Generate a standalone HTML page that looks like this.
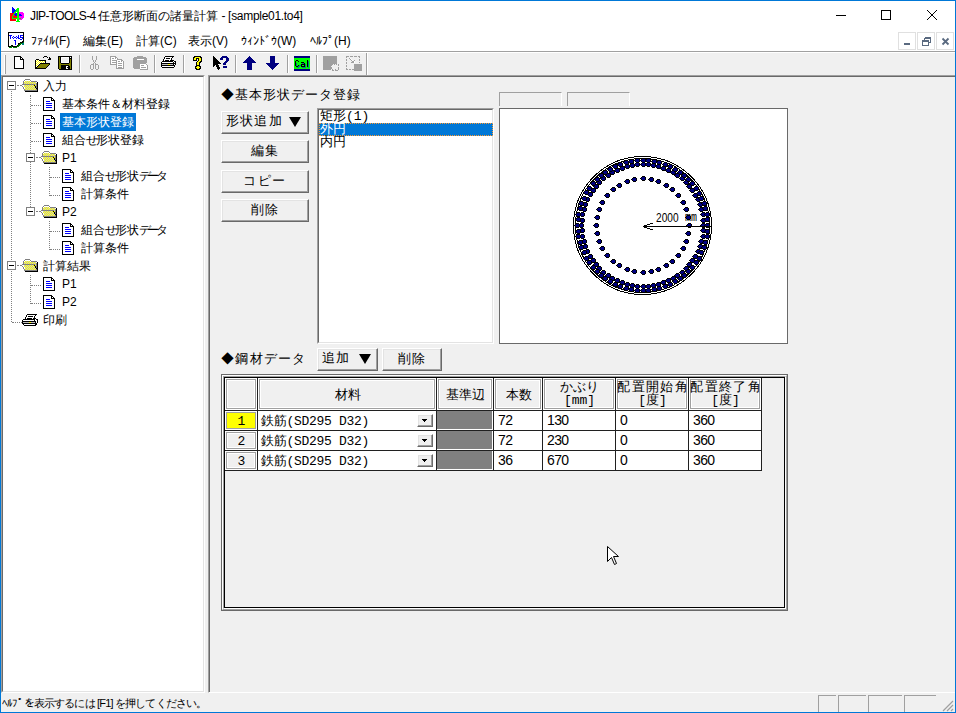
<!DOCTYPE html>
<html><head><meta charset="utf-8">
<style>
*{box-sizing:border-box;margin:0;padding:0}
html,body{width:956px;height:713px;overflow:hidden;background:#f0f0f0;font-family:"Liberation Sans",sans-serif;font-size:12px;color:#000}
.a{position:absolute}
.t{position:absolute;white-space:nowrap;line-height:1}
.m{font-family:"Liberation Mono",monospace}
.sep{position:absolute;top:55px;width:2px;height:18px;border-left:1px solid #a0a0a0;border-right:1px solid #fff}
.btn{position:absolute;background:#f0f0f0;border-top:1px solid #fff;border-left:1px solid #fff;border-right:1px solid #696969;border-bottom:1px solid #696969;box-shadow:inset -1px -1px 0 #a0a0a0,inset 1px 1px 0 #e3e3e3}
.dl{position:absolute;border-left:1px dotted #808080;width:1px}
.dh{position:absolute;border-top:1px dotted #808080;height:1px}
</style></head>
<body>

<div class="a" style="left:0;top:0;width:956px;height:713px;border:1px solid #0078d7"></div>
<div class="a" style="left:1px;top:1px;width:954px;height:50px;background:#fff"></div>
<div class="a" style="left:1px;top:51px;width:954px;height:1px;background:#a0a0a0"></div>
<div class="a" style="left:1px;top:52px;width:954px;height:1px;background:#fff"></div>
<svg class="a" style="left:9px;top:7px" width="16" height="15" viewBox="0 0 16 15" shape-rendering="crispEdges"><rect x="3" y="0" width="1" height="1" fill="#0000ff"/><rect x="3" y="1" width="2" height="1" fill="#0000ff"/><rect x="8" y="1" width="2" height="1" fill="#00ff00"/><rect x="3" y="2" width="3" height="1" fill="#0000ff"/><rect x="7" y="2" width="3" height="1" fill="#00ff00"/><rect x="3" y="3" width="4" height="1" fill="#0000ff"/><rect x="7" y="3" width="3" height="1" fill="#00ff00"/><rect x="3" y="4" width="3" height="1" fill="#0000ff"/><rect x="6" y="4" width="4" height="1" fill="#00ff00"/><rect x="3" y="5" width="2" height="1" fill="#0000ff"/><rect x="5" y="5" width="2" height="1" fill="#00ff00"/><rect x="8" y="5" width="2" height="1" fill="#00ff00"/><rect x="10" y="5" width="4" height="1" fill="#ff00ff"/><rect x="1" y="6" width="4" height="1" fill="#ff0000"/><rect x="5" y="6" width="1" height="1" fill="#00ff00"/><rect x="6" y="6" width="2" height="1" fill="#0000ff"/><rect x="8" y="6" width="2" height="1" fill="#00ff00"/><rect x="10" y="6" width="5" height="1" fill="#ff00ff"/><rect x="1" y="7" width="3" height="1" fill="#ff0000"/><rect x="4" y="7" width="1" height="1" fill="#00ff00"/><rect x="5" y="7" width="3" height="1" fill="#0000ff"/><rect x="8" y="7" width="2" height="1" fill="#00ff00"/><rect x="10" y="7" width="2" height="1" fill="#0000ff"/><rect x="12" y="7" width="3" height="1" fill="#ff00ff"/><rect x="1" y="8" width="3" height="1" fill="#ff0000"/><rect x="4" y="8" width="1" height="1" fill="#00ff00"/><rect x="5" y="8" width="1" height="1" fill="#ff0000"/><rect x="6" y="8" width="2" height="1" fill="#0000ff"/><rect x="8" y="8" width="2" height="1" fill="#00ff00"/><rect x="10" y="8" width="3" height="1" fill="#0000ff"/><rect x="13" y="8" width="2" height="1" fill="#ff00ff"/><rect x="1" y="9" width="2" height="1" fill="#ff0000"/><rect x="3" y="9" width="1" height="1" fill="#00ff00"/><rect x="4" y="9" width="4" height="1" fill="#ff0000"/><rect x="8" y="9" width="2" height="1" fill="#00ff00"/><rect x="10" y="9" width="5" height="1" fill="#ff00ff"/><rect x="1" y="10" width="2" height="1" fill="#ff0000"/><rect x="3" y="10" width="1" height="1" fill="#00ff00"/><rect x="4" y="10" width="4" height="1" fill="#ff0000"/><rect x="8" y="10" width="2" height="1" fill="#00ff00"/><rect x="10" y="10" width="5" height="1" fill="#ff00ff"/><rect x="1" y="11" width="2" height="1" fill="#ff0000"/><rect x="3" y="11" width="9" height="1" fill="#00ff00"/><rect x="12" y="11" width="2" height="1" fill="#ff00ff"/><rect x="1" y="12" width="6" height="1" fill="#ff0000"/><rect x="8" y="12" width="2" height="1" fill="#00ff00"/><rect x="10" y="12" width="3" height="1" fill="#ff00ff"/><rect x="1" y="13" width="6" height="1" fill="#ff0000"/><rect x="8" y="13" width="2" height="1" fill="#00ff00"/><rect x="7" y="14" width="4" height="1" fill="#00ff00"/></svg>
<div class="t" style="left:30px;top:10px;font-size:12px"><span style="letter-spacing:-0.62px">JIP-TOOLS-4 </span>任意形断面の諸量計算<span style="letter-spacing:-0.3px"> - [sample01.to4]</span></div>
<div class="a" style="left:836px;top:15px;width:10px;height:1px;background:#000"></div>
<div class="a" style="left:881px;top:10px;width:10px;height:10px;border:1px solid #000"></div>
<svg class="a" style="left:926px;top:9px" width="12" height="12" viewBox="0 0 12 12"><path d="M1,1 L11,11 M11,1 L1,11" stroke="#000" stroke-width="1"/></svg>
<svg class="a" style="left:8px;top:32px" width="16" height="16" viewBox="0 0 16 16" shape-rendering="crispEdges"><rect x="0" y="0" width="16" height="1" fill="#000"/><rect x="0" y="1" width="1" height="1" fill="#000"/><rect x="1" y="1" width="14" height="1" fill="#fff"/><rect x="15" y="1" width="1" height="1" fill="#000"/><rect x="0" y="2" width="1" height="1" fill="#000"/><rect x="1" y="2" width="14" height="1" fill="#fff"/><rect x="15" y="2" width="1" height="1" fill="#000"/><rect x="0" y="3" width="1" height="1" fill="#000"/><rect x="1" y="3" width="3" height="1" fill="#0000ff"/><rect x="4" y="3" width="6" height="1" fill="#fff"/><rect x="10" y="3" width="1" height="1" fill="#0000ff"/><rect x="11" y="3" width="1" height="1" fill="#fff"/><rect x="12" y="3" width="3" height="1" fill="#0000ff"/><rect x="15" y="3" width="1" height="1" fill="#000"/><rect x="0" y="4" width="1" height="1" fill="#000"/><rect x="1" y="4" width="1" height="1" fill="#fff"/><rect x="2" y="4" width="1" height="1" fill="#0000ff"/><rect x="3" y="4" width="2" height="1" fill="#fff"/><rect x="5" y="4" width="1" height="1" fill="#0000ff"/><rect x="6" y="4" width="2" height="1" fill="#fff"/><rect x="8" y="4" width="1" height="1" fill="#0000ff"/><rect x="9" y="4" width="1" height="1" fill="#fff"/><rect x="10" y="4" width="1" height="1" fill="#0000ff"/><rect x="11" y="4" width="1" height="1" fill="#fff"/><rect x="12" y="4" width="1" height="1" fill="#0000ff"/><rect x="13" y="4" width="2" height="1" fill="#fff"/><rect x="15" y="4" width="1" height="1" fill="#000"/><rect x="0" y="5" width="1" height="1" fill="#000"/><rect x="1" y="5" width="1" height="1" fill="#fff"/><rect x="2" y="5" width="1" height="1" fill="#0000ff"/><rect x="3" y="5" width="1" height="1" fill="#fff"/><rect x="4" y="5" width="1" height="1" fill="#0000ff"/><rect x="5" y="5" width="1" height="1" fill="#fff"/><rect x="6" y="5" width="2" height="1" fill="#0000ff"/><rect x="8" y="5" width="1" height="1" fill="#fff"/><rect x="9" y="5" width="2" height="1" fill="#0000ff"/><rect x="11" y="5" width="1" height="1" fill="#fff"/><rect x="12" y="5" width="3" height="1" fill="#0000ff"/><rect x="15" y="5" width="1" height="1" fill="#000"/><rect x="0" y="6" width="1" height="1" fill="#000"/><rect x="1" y="6" width="1" height="1" fill="#fff"/><rect x="2" y="6" width="1" height="1" fill="#0000ff"/><rect x="3" y="6" width="2" height="1" fill="#fff"/><rect x="5" y="6" width="1" height="1" fill="#0000ff"/><rect x="6" y="6" width="2" height="1" fill="#fff"/><rect x="8" y="6" width="1" height="1" fill="#0000ff"/><rect x="9" y="6" width="1" height="1" fill="#fff"/><rect x="10" y="6" width="2" height="1" fill="#0000ff"/><rect x="12" y="6" width="2" height="1" fill="#fff"/><rect x="14" y="6" width="1" height="1" fill="#0000ff"/><rect x="15" y="6" width="1" height="1" fill="#000"/><rect x="0" y="7" width="1" height="1" fill="#000"/><rect x="1" y="7" width="11" height="1" fill="#fff"/><rect x="12" y="7" width="2" height="1" fill="#0000ff"/><rect x="14" y="7" width="1" height="1" fill="#fff"/><rect x="15" y="7" width="1" height="1" fill="#000"/><rect x="0" y="8" width="1" height="1" fill="#000"/><rect x="1" y="8" width="5" height="1" fill="#fff"/><rect x="6" y="8" width="2" height="1" fill="#0000ff"/><rect x="8" y="8" width="7" height="1" fill="#fff"/><rect x="15" y="8" width="1" height="1" fill="#000"/><rect x="0" y="9" width="1" height="1" fill="#000"/><rect x="1" y="9" width="6" height="1" fill="#fff"/><rect x="7" y="9" width="1" height="1" fill="#0000ff"/><rect x="8" y="9" width="6" height="1" fill="#fff"/><rect x="14" y="9" width="2" height="1" fill="#000"/><rect x="0" y="10" width="1" height="1" fill="#000"/><rect x="1" y="10" width="6" height="1" fill="#fff"/><rect x="7" y="10" width="1" height="1" fill="#0000ff"/><rect x="8" y="10" width="4" height="1" fill="#fff"/><rect x="12" y="10" width="3" height="1" fill="#000"/><rect x="15" y="10" width="1" height="1" fill="#008000"/><rect x="0" y="11" width="1" height="1" fill="#000"/><rect x="1" y="11" width="6" height="1" fill="#fff"/><rect x="7" y="11" width="1" height="1" fill="#0000ff"/><rect x="8" y="11" width="2" height="1" fill="#fff"/><rect x="10" y="11" width="2" height="1" fill="#000"/><rect x="12" y="11" width="2" height="1" fill="#008000"/><rect x="14" y="11" width="2" height="1" fill="#008080"/><rect x="0" y="12" width="1" height="1" fill="#000"/><rect x="1" y="12" width="6" height="1" fill="#fff"/><rect x="7" y="12" width="1" height="1" fill="#0000ff"/><rect x="8" y="12" width="2" height="1" fill="#fff"/><rect x="10" y="12" width="1" height="1" fill="#000"/><rect x="11" y="12" width="2" height="1" fill="#008000"/><rect x="14" y="12" width="2" height="1" fill="#008080"/><rect x="0" y="13" width="1" height="1" fill="#000"/><rect x="1" y="13" width="2" height="1" fill="#fff"/><rect x="3" y="13" width="2" height="1" fill="#000"/><rect x="5" y="13" width="4" height="1" fill="#fff"/><rect x="9" y="13" width="1" height="1" fill="#000"/><rect x="10" y="13" width="2" height="1" fill="#008000"/><rect x="0" y="14" width="3" height="1" fill="#000"/><rect x="3" y="14" width="1" height="1" fill="#008000"/><rect x="4" y="14" width="5" height="1" fill="#000"/><rect x="9" y="14" width="2" height="1" fill="#008000"/><rect x="1" y="15" width="3" height="1" fill="#008000"/><rect x="5" y="15" width="4" height="1" fill="#008000"/></svg>
<div class="t" style="left:31px;top:35px;font-size:12px">ﾌｧｲﾙ(F)</div>
<div class="t" style="left:83px;top:35px;font-size:12px">編集(E)</div>
<div class="t" style="left:136px;top:35px;font-size:12px">計算(C)</div>
<div class="t" style="left:188px;top:35px;font-size:12px">表示(V)</div>
<div class="t" style="left:241px;top:35px;font-size:12px">ｳｨﾝﾄﾞｳ(W)</div>
<div class="t" style="left:310px;top:35px;font-size:12px">ﾍﾙﾌﾟ(H)</div>
<div class="a" style="left:898px;top:32px;width:18px;height:18px;border:1px solid #e0e0e0;background:#fff"></div>
<div class="a" style="left:917px;top:32px;width:18px;height:18px;border:1px solid #e0e0e0;background:#fff"></div>
<div class="a" style="left:936px;top:32px;width:18px;height:18px;border:1px solid #e0e0e0;background:#fff"></div>
<div class="a" style="left:904px;top:43px;width:6px;height:2px;background:#5a6a80"></div>
<svg class="a" style="left:922px;top:37px" width="10" height="10" viewBox="0 0 10 10" shape-rendering="crispEdges"><path d="M2.5,0.5 h6 v5 h-2 M0.5,3.5 h6 v5 h-6z M2.5,0.5 v3 M0.5,4.5 h6 M2.5,1.5 h6" fill="none" stroke="#5a6a80"/></svg>
<svg class="a" style="left:941px;top:37px" width="10" height="10" viewBox="0 0 10 10"><path d="M1.5,1.5 L7.5,7.5 M7.5,1.5 L1.5,7.5" stroke="#5a6a80" stroke-width="1.8"/></svg>
<div class="a" style="left:4px;top:55px;width:2px;height:19px;border-left:1px solid #fff;border-right:1px solid #a0a0a0"></div>
<div class="a" style="left:366px;top:53px;width:2px;height:22px;border-left:1px solid #a0a0a0;border-right:1px solid #fff"></div>
<div class="sep" style="left:79px"></div>
<div class="sep" style="left:154px"></div>
<div class="sep" style="left:183px"></div>
<div class="sep" style="left:235px"></div>
<div class="sep" style="left:287px"></div>
<div class="sep" style="left:316px"></div>
<svg class="a" style="left:14px;top:56px" width="11" height="13" viewBox="0 0 11 13" shape-rendering="crispEdges"><rect x="0" y="0" width="7" height="1" fill="#000"/><rect x="0" y="1" width="1" height="1" fill="#000"/><rect x="1" y="1" width="5" height="1" fill="#fff"/><rect x="6" y="1" width="2" height="1" fill="#000"/><rect x="0" y="2" width="1" height="1" fill="#000"/><rect x="1" y="2" width="5" height="1" fill="#fff"/><rect x="6" y="2" width="1" height="1" fill="#000"/><rect x="7" y="2" width="1" height="1" fill="#fff"/><rect x="8" y="2" width="1" height="1" fill="#000"/><rect x="0" y="3" width="1" height="1" fill="#000"/><rect x="1" y="3" width="5" height="1" fill="#fff"/><rect x="6" y="3" width="4" height="1" fill="#000"/><rect x="0" y="4" width="1" height="1" fill="#000"/><rect x="1" y="4" width="8" height="1" fill="#fff"/><rect x="9" y="4" width="1" height="1" fill="#000"/><rect x="0" y="5" width="1" height="1" fill="#000"/><rect x="1" y="5" width="8" height="1" fill="#fff"/><rect x="9" y="5" width="1" height="1" fill="#000"/><rect x="0" y="6" width="1" height="1" fill="#000"/><rect x="1" y="6" width="8" height="1" fill="#fff"/><rect x="9" y="6" width="1" height="1" fill="#000"/><rect x="0" y="7" width="1" height="1" fill="#000"/><rect x="1" y="7" width="8" height="1" fill="#fff"/><rect x="9" y="7" width="1" height="1" fill="#000"/><rect x="0" y="8" width="1" height="1" fill="#000"/><rect x="1" y="8" width="8" height="1" fill="#fff"/><rect x="9" y="8" width="1" height="1" fill="#000"/><rect x="0" y="9" width="1" height="1" fill="#000"/><rect x="1" y="9" width="8" height="1" fill="#fff"/><rect x="9" y="9" width="1" height="1" fill="#000"/><rect x="0" y="10" width="1" height="1" fill="#000"/><rect x="1" y="10" width="8" height="1" fill="#fff"/><rect x="9" y="10" width="1" height="1" fill="#000"/><rect x="0" y="11" width="1" height="1" fill="#000"/><rect x="1" y="11" width="8" height="1" fill="#fff"/><rect x="9" y="11" width="1" height="1" fill="#000"/><rect x="0" y="12" width="10" height="1" fill="#000"/></svg>
<svg class="a" style="left:35px;top:56px" width="16" height="13" viewBox="0 0 16 13" shape-rendering="crispEdges"><rect x="9" y="0" width="3" height="1" fill="#000"/><rect x="8" y="1" width="1" height="1" fill="#000"/><rect x="12" y="1" width="1" height="1" fill="#000"/><rect x="14" y="1" width="1" height="1" fill="#000"/><rect x="14" y="2" width="2" height="1" fill="#000"/><rect x="1" y="3" width="3" height="1" fill="#000"/><rect x="13" y="3" width="3" height="1" fill="#000"/><rect x="0" y="4" width="1" height="1" fill="#000"/><rect x="1" y="4" width="1" height="1" fill="#fff"/><rect x="2" y="4" width="1" height="1" fill="#ffff00"/><rect x="3" y="4" width="1" height="1" fill="#fff"/><rect x="4" y="4" width="7" height="1" fill="#000"/><rect x="0" y="5" width="1" height="1" fill="#000"/><rect x="1" y="5" width="1" height="1" fill="#ffff00"/><rect x="2" y="5" width="1" height="1" fill="#fff"/><rect x="3" y="5" width="1" height="1" fill="#ffff00"/><rect x="4" y="5" width="1" height="1" fill="#fff"/><rect x="5" y="5" width="1" height="1" fill="#ffff00"/><rect x="6" y="5" width="1" height="1" fill="#fff"/><rect x="7" y="5" width="1" height="1" fill="#ffff00"/><rect x="8" y="5" width="1" height="1" fill="#fff"/><rect x="9" y="5" width="1" height="1" fill="#ffff00"/><rect x="10" y="5" width="1" height="1" fill="#000"/><rect x="0" y="6" width="1" height="1" fill="#000"/><rect x="1" y="6" width="1" height="1" fill="#fff"/><rect x="2" y="6" width="1" height="1" fill="#ffff00"/><rect x="3" y="6" width="1" height="1" fill="#fff"/><rect x="4" y="6" width="1" height="1" fill="#ffff00"/><rect x="5" y="6" width="1" height="1" fill="#fff"/><rect x="6" y="6" width="1" height="1" fill="#ffff00"/><rect x="7" y="6" width="1" height="1" fill="#fff"/><rect x="8" y="6" width="1" height="1" fill="#ffff00"/><rect x="9" y="6" width="1" height="1" fill="#fff"/><rect x="10" y="6" width="1" height="1" fill="#000"/><rect x="0" y="7" width="1" height="1" fill="#000"/><rect x="1" y="7" width="1" height="1" fill="#ffff00"/><rect x="2" y="7" width="1" height="1" fill="#fff"/><rect x="3" y="7" width="1" height="1" fill="#ffff00"/><rect x="4" y="7" width="1" height="1" fill="#fff"/><rect x="5" y="7" width="10" height="1" fill="#000"/><rect x="0" y="8" width="1" height="1" fill="#000"/><rect x="1" y="8" width="1" height="1" fill="#fff"/><rect x="2" y="8" width="1" height="1" fill="#ffff00"/><rect x="3" y="8" width="1" height="1" fill="#fff"/><rect x="4" y="8" width="1" height="1" fill="#000"/><rect x="5" y="8" width="9" height="1" fill="#808000"/><rect x="14" y="8" width="1" height="1" fill="#000"/><rect x="0" y="9" width="1" height="1" fill="#000"/><rect x="1" y="9" width="1" height="1" fill="#ffff00"/><rect x="2" y="9" width="1" height="1" fill="#fff"/><rect x="3" y="9" width="1" height="1" fill="#000"/><rect x="4" y="9" width="9" height="1" fill="#808000"/><rect x="13" y="9" width="1" height="1" fill="#000"/><rect x="0" y="10" width="1" height="1" fill="#000"/><rect x="1" y="10" width="1" height="1" fill="#fff"/><rect x="2" y="10" width="1" height="1" fill="#000"/><rect x="3" y="10" width="9" height="1" fill="#808000"/><rect x="12" y="10" width="1" height="1" fill="#000"/><rect x="0" y="11" width="2" height="1" fill="#000"/><rect x="2" y="11" width="9" height="1" fill="#808000"/><rect x="11" y="11" width="1" height="1" fill="#000"/><rect x="0" y="12" width="11" height="1" fill="#000"/></svg>
<svg class="a" style="left:58px;top:56px" width="14" height="14" viewBox="0 0 14 14" shape-rendering="crispEdges"><rect x="0" y="0" width="14" height="1" fill="#000"/><rect x="0" y="1" width="1" height="1" fill="#000"/><rect x="1" y="1" width="1" height="1" fill="#808000"/><rect x="2" y="1" width="1" height="1" fill="#000"/><rect x="3" y="1" width="8" height="1" fill="#fff"/><rect x="11" y="1" width="1" height="1" fill="#000"/><rect x="12" y="1" width="1" height="1" fill="#fff"/><rect x="13" y="1" width="1" height="1" fill="#000"/><rect x="0" y="2" width="1" height="1" fill="#000"/><rect x="1" y="2" width="1" height="1" fill="#808000"/><rect x="2" y="2" width="1" height="1" fill="#000"/><rect x="3" y="2" width="1" height="1" fill="#fff"/><rect x="4" y="2" width="6" height="1" fill="#f0f0f0"/><rect x="10" y="2" width="1" height="1" fill="#fff"/><rect x="11" y="2" width="3" height="1" fill="#000"/><rect x="0" y="3" width="1" height="1" fill="#000"/><rect x="1" y="3" width="1" height="1" fill="#808000"/><rect x="2" y="3" width="1" height="1" fill="#000"/><rect x="3" y="3" width="1" height="1" fill="#fff"/><rect x="4" y="3" width="6" height="1" fill="#f0f0f0"/><rect x="10" y="3" width="1" height="1" fill="#fff"/><rect x="11" y="3" width="1" height="1" fill="#000"/><rect x="12" y="3" width="1" height="1" fill="#808000"/><rect x="13" y="3" width="1" height="1" fill="#000"/><rect x="0" y="4" width="1" height="1" fill="#000"/><rect x="1" y="4" width="1" height="1" fill="#808000"/><rect x="2" y="4" width="1" height="1" fill="#000"/><rect x="3" y="4" width="1" height="1" fill="#fff"/><rect x="4" y="4" width="6" height="1" fill="#f0f0f0"/><rect x="10" y="4" width="1" height="1" fill="#fff"/><rect x="11" y="4" width="1" height="1" fill="#000"/><rect x="12" y="4" width="1" height="1" fill="#808000"/><rect x="13" y="4" width="1" height="1" fill="#000"/><rect x="0" y="5" width="1" height="1" fill="#000"/><rect x="1" y="5" width="1" height="1" fill="#808000"/><rect x="2" y="5" width="1" height="1" fill="#000"/><rect x="3" y="5" width="1" height="1" fill="#fff"/><rect x="4" y="5" width="6" height="1" fill="#f0f0f0"/><rect x="10" y="5" width="1" height="1" fill="#fff"/><rect x="11" y="5" width="1" height="1" fill="#000"/><rect x="12" y="5" width="1" height="1" fill="#808000"/><rect x="13" y="5" width="1" height="1" fill="#000"/><rect x="0" y="6" width="1" height="1" fill="#000"/><rect x="1" y="6" width="1" height="1" fill="#808000"/><rect x="2" y="6" width="1" height="1" fill="#000"/><rect x="3" y="6" width="8" height="1" fill="#fff"/><rect x="11" y="6" width="1" height="1" fill="#000"/><rect x="12" y="6" width="1" height="1" fill="#808000"/><rect x="13" y="6" width="1" height="1" fill="#000"/><rect x="0" y="7" width="1" height="1" fill="#000"/><rect x="1" y="7" width="2" height="1" fill="#808000"/><rect x="3" y="7" width="8" height="1" fill="#000"/><rect x="11" y="7" width="2" height="1" fill="#808000"/><rect x="13" y="7" width="1" height="1" fill="#000"/><rect x="0" y="8" width="1" height="1" fill="#000"/><rect x="1" y="8" width="12" height="1" fill="#808000"/><rect x="13" y="8" width="1" height="1" fill="#000"/><rect x="0" y="9" width="1" height="1" fill="#000"/><rect x="1" y="9" width="2" height="1" fill="#808000"/><rect x="3" y="9" width="8" height="1" fill="#000"/><rect x="11" y="9" width="2" height="1" fill="#808000"/><rect x="13" y="9" width="1" height="1" fill="#000"/><rect x="0" y="10" width="1" height="1" fill="#000"/><rect x="1" y="10" width="2" height="1" fill="#808000"/><rect x="3" y="10" width="5" height="1" fill="#000"/><rect x="8" y="10" width="2" height="1" fill="#fff"/><rect x="10" y="10" width="2" height="1" fill="#000"/><rect x="12" y="10" width="1" height="1" fill="#808000"/><rect x="13" y="10" width="1" height="1" fill="#000"/><rect x="0" y="11" width="1" height="1" fill="#000"/><rect x="1" y="11" width="2" height="1" fill="#808000"/><rect x="3" y="11" width="5" height="1" fill="#000"/><rect x="8" y="11" width="1" height="1" fill="#fff"/><rect x="9" y="11" width="3" height="1" fill="#000"/><rect x="12" y="11" width="1" height="1" fill="#808000"/><rect x="13" y="11" width="1" height="1" fill="#000"/><rect x="0" y="12" width="1" height="1" fill="#000"/><rect x="1" y="12" width="2" height="1" fill="#808000"/><rect x="3" y="12" width="5" height="1" fill="#000"/><rect x="8" y="12" width="2" height="1" fill="#fff"/><rect x="10" y="12" width="2" height="1" fill="#000"/><rect x="12" y="12" width="1" height="1" fill="#808000"/><rect x="13" y="12" width="1" height="1" fill="#000"/><rect x="1" y="13" width="13" height="1" fill="#000"/></svg>
<svg class="a" style="left:90px;top:56px" width="10" height="14" viewBox="0 0 10 14" shape-rendering="crispEdges"><rect x="2" y="0" width="1" height="1" fill="#a0a0a0"/><rect x="6" y="0" width="1" height="1" fill="#a0a0a0"/><rect x="2" y="1" width="1" height="1" fill="#a0a0a0"/><rect x="6" y="1" width="1" height="1" fill="#a0a0a0"/><rect x="2" y="2" width="1" height="1" fill="#a0a0a0"/><rect x="6" y="2" width="1" height="1" fill="#a0a0a0"/><rect x="2" y="3" width="1" height="1" fill="#a0a0a0"/><rect x="6" y="3" width="1" height="1" fill="#a0a0a0"/><rect x="3" y="4" width="1" height="1" fill="#a0a0a0"/><rect x="5" y="4" width="1" height="1" fill="#a0a0a0"/><rect x="3" y="5" width="1" height="1" fill="#a0a0a0"/><rect x="5" y="5" width="1" height="1" fill="#a0a0a0"/><rect x="4" y="6" width="1" height="1" fill="#a0a0a0"/><rect x="3" y="7" width="1" height="1" fill="#a0a0a0"/><rect x="5" y="7" width="1" height="1" fill="#a0a0a0"/><rect x="1" y="8" width="3" height="1" fill="#a0a0a0"/><rect x="5" y="8" width="3" height="1" fill="#a0a0a0"/><rect x="0" y="9" width="1" height="1" fill="#a0a0a0"/><rect x="3" y="9" width="1" height="1" fill="#a0a0a0"/><rect x="5" y="9" width="1" height="1" fill="#a0a0a0"/><rect x="8" y="9" width="1" height="1" fill="#a0a0a0"/><rect x="0" y="10" width="1" height="1" fill="#a0a0a0"/><rect x="3" y="10" width="1" height="1" fill="#a0a0a0"/><rect x="5" y="10" width="1" height="1" fill="#a0a0a0"/><rect x="8" y="10" width="1" height="1" fill="#a0a0a0"/><rect x="0" y="11" width="1" height="1" fill="#a0a0a0"/><rect x="3" y="11" width="1" height="1" fill="#a0a0a0"/><rect x="5" y="11" width="1" height="1" fill="#a0a0a0"/><rect x="8" y="11" width="1" height="1" fill="#a0a0a0"/><rect x="0" y="12" width="1" height="1" fill="#a0a0a0"/><rect x="3" y="12" width="1" height="1" fill="#a0a0a0"/><rect x="5" y="12" width="1" height="1" fill="#a0a0a0"/><rect x="8" y="12" width="1" height="1" fill="#a0a0a0"/><rect x="1" y="13" width="2" height="1" fill="#a0a0a0"/><rect x="6" y="13" width="2" height="1" fill="#a0a0a0"/></svg>
<svg class="a" style="left:110px;top:56px" width="15" height="13" viewBox="0 0 15 13" shape-rendering="crispEdges"><rect x="0" y="0" width="6" height="1" fill="#a0a0a0"/><rect x="0" y="1" width="1" height="1" fill="#a0a0a0"/><rect x="1" y="1" width="4" height="1" fill="#fff"/><rect x="5" y="1" width="2" height="1" fill="#a0a0a0"/><rect x="0" y="2" width="1" height="1" fill="#a0a0a0"/><rect x="1" y="2" width="1" height="1" fill="#fff"/><rect x="2" y="2" width="2" height="1" fill="#a0a0a0"/><rect x="4" y="2" width="1" height="1" fill="#fff"/><rect x="5" y="2" width="1" height="1" fill="#a0a0a0"/><rect x="6" y="2" width="1" height="1" fill="#fff"/><rect x="7" y="2" width="1" height="1" fill="#a0a0a0"/><rect x="0" y="3" width="1" height="1" fill="#a0a0a0"/><rect x="1" y="3" width="6" height="1" fill="#fff"/><rect x="7" y="3" width="5" height="1" fill="#a0a0a0"/><rect x="0" y="4" width="1" height="1" fill="#a0a0a0"/><rect x="1" y="4" width="1" height="1" fill="#fff"/><rect x="2" y="4" width="5" height="1" fill="#a0a0a0"/><rect x="7" y="4" width="4" height="1" fill="#fff"/><rect x="11" y="4" width="2" height="1" fill="#a0a0a0"/><rect x="0" y="5" width="1" height="1" fill="#a0a0a0"/><rect x="1" y="5" width="5" height="1" fill="#fff"/><rect x="6" y="5" width="1" height="1" fill="#a0a0a0"/><rect x="7" y="5" width="1" height="1" fill="#fff"/><rect x="8" y="5" width="2" height="1" fill="#a0a0a0"/><rect x="10" y="5" width="1" height="1" fill="#fff"/><rect x="11" y="5" width="1" height="1" fill="#a0a0a0"/><rect x="12" y="5" width="1" height="1" fill="#fff"/><rect x="13" y="5" width="1" height="1" fill="#a0a0a0"/><rect x="0" y="6" width="1" height="1" fill="#a0a0a0"/><rect x="1" y="6" width="1" height="1" fill="#fff"/><rect x="2" y="6" width="5" height="1" fill="#a0a0a0"/><rect x="7" y="6" width="6" height="1" fill="#fff"/><rect x="13" y="6" width="1" height="1" fill="#a0a0a0"/><rect x="0" y="7" width="1" height="1" fill="#a0a0a0"/><rect x="1" y="7" width="5" height="1" fill="#fff"/><rect x="6" y="7" width="1" height="1" fill="#a0a0a0"/><rect x="7" y="7" width="1" height="1" fill="#fff"/><rect x="8" y="7" width="4" height="1" fill="#a0a0a0"/><rect x="12" y="7" width="1" height="1" fill="#fff"/><rect x="13" y="7" width="1" height="1" fill="#a0a0a0"/><rect x="0" y="8" width="7" height="1" fill="#a0a0a0"/><rect x="7" y="8" width="6" height="1" fill="#fff"/><rect x="13" y="8" width="1" height="1" fill="#a0a0a0"/><rect x="6" y="9" width="1" height="1" fill="#a0a0a0"/><rect x="7" y="9" width="1" height="1" fill="#fff"/><rect x="8" y="9" width="4" height="1" fill="#a0a0a0"/><rect x="12" y="9" width="1" height="1" fill="#fff"/><rect x="13" y="9" width="1" height="1" fill="#a0a0a0"/><rect x="6" y="10" width="1" height="1" fill="#a0a0a0"/><rect x="7" y="10" width="6" height="1" fill="#fff"/><rect x="13" y="10" width="1" height="1" fill="#a0a0a0"/><rect x="6" y="11" width="1" height="1" fill="#a0a0a0"/><rect x="7" y="11" width="1" height="1" fill="#fff"/><rect x="8" y="11" width="4" height="1" fill="#a0a0a0"/><rect x="12" y="11" width="1" height="1" fill="#fff"/><rect x="13" y="11" width="1" height="1" fill="#a0a0a0"/><rect x="6" y="12" width="8" height="1" fill="#a0a0a0"/></svg>
<svg class="a" style="left:133px;top:56px" width="16" height="14" viewBox="0 0 16 14" shape-rendering="crispEdges"><rect x="4" y="0" width="6" height="1" fill="#a0a0a0"/><rect x="1" y="1" width="12" height="1" fill="#a0a0a0"/><rect x="0" y="2" width="14" height="1" fill="#a0a0a0"/><rect x="0" y="3" width="4" height="1" fill="#a0a0a0"/><rect x="4" y="3" width="7" height="1" fill="#fff"/><rect x="11" y="3" width="3" height="1" fill="#a0a0a0"/><rect x="0" y="4" width="14" height="1" fill="#a0a0a0"/><rect x="0" y="5" width="14" height="1" fill="#a0a0a0"/><rect x="0" y="6" width="14" height="1" fill="#a0a0a0"/><rect x="0" y="7" width="13" height="1" fill="#a0a0a0"/><rect x="0" y="8" width="7" height="1" fill="#a0a0a0"/><rect x="7" y="8" width="6" height="1" fill="#fff"/><rect x="13" y="8" width="1" height="1" fill="#a0a0a0"/><rect x="0" y="9" width="7" height="1" fill="#a0a0a0"/><rect x="7" y="9" width="1" height="1" fill="#fff"/><rect x="8" y="9" width="3" height="1" fill="#a0a0a0"/><rect x="11" y="9" width="3" height="1" fill="#fff"/><rect x="14" y="9" width="1" height="1" fill="#a0a0a0"/><rect x="0" y="10" width="7" height="1" fill="#a0a0a0"/><rect x="7" y="10" width="7" height="1" fill="#fff"/><rect x="14" y="10" width="1" height="1" fill="#a0a0a0"/><rect x="0" y="11" width="7" height="1" fill="#a0a0a0"/><rect x="7" y="11" width="1" height="1" fill="#fff"/><rect x="8" y="11" width="5" height="1" fill="#a0a0a0"/><rect x="13" y="11" width="1" height="1" fill="#fff"/><rect x="14" y="11" width="1" height="1" fill="#a0a0a0"/><rect x="1" y="12" width="6" height="1" fill="#a0a0a0"/><rect x="7" y="12" width="7" height="1" fill="#fff"/><rect x="14" y="12" width="1" height="1" fill="#a0a0a0"/><rect x="7" y="13" width="8" height="1" fill="#a0a0a0"/></svg>
<svg class="a" style="left:161px;top:56px" width="16" height="12" viewBox="0 0 16 12" shape-rendering="crispEdges"><rect x="4" y="0" width="9" height="1" fill="#000"/><rect x="3" y="1" width="1" height="1" fill="#000"/><rect x="4" y="1" width="7" height="1" fill="#fff"/><rect x="11" y="1" width="1" height="1" fill="#000"/><rect x="3" y="2" width="1" height="1" fill="#000"/><rect x="4" y="2" width="1" height="1" fill="#fff"/><rect x="5" y="2" width="4" height="1" fill="#000"/><rect x="9" y="2" width="1" height="1" fill="#fff"/><rect x="10" y="2" width="1" height="1" fill="#000"/><rect x="2" y="3" width="1" height="1" fill="#000"/><rect x="3" y="3" width="7" height="1" fill="#fff"/><rect x="10" y="3" width="1" height="1" fill="#000"/><rect x="2" y="4" width="1" height="1" fill="#000"/><rect x="3" y="4" width="1" height="1" fill="#fff"/><rect x="4" y="4" width="4" height="1" fill="#000"/><rect x="8" y="4" width="1" height="1" fill="#fff"/><rect x="9" y="4" width="4" height="1" fill="#000"/><rect x="1" y="5" width="11" height="1" fill="#000"/><rect x="12" y="5" width="1" height="1" fill="#fff"/><rect x="13" y="5" width="2" height="1" fill="#000"/><rect x="0" y="6" width="1" height="1" fill="#000"/><rect x="1" y="6" width="11" height="1" fill="#fff"/><rect x="12" y="6" width="1" height="1" fill="#000"/><rect x="13" y="6" width="1" height="1" fill="#fff"/><rect x="14" y="6" width="1" height="1" fill="#000"/><rect x="0" y="7" width="15" height="1" fill="#000"/><rect x="0" y="8" width="1" height="1" fill="#000"/><rect x="1" y="8" width="6" height="1" fill="#c0c0c0"/><rect x="7" y="8" width="2" height="1" fill="#ffff00"/><rect x="9" y="8" width="3" height="1" fill="#c0c0c0"/><rect x="12" y="8" width="1" height="1" fill="#000"/><rect x="13" y="8" width="1" height="1" fill="#fff"/><rect x="14" y="8" width="1" height="1" fill="#000"/><rect x="0" y="9" width="14" height="1" fill="#000"/><rect x="0" y="10" width="1" height="1" fill="#000"/><rect x="1" y="10" width="12" height="1" fill="#fff"/><rect x="13" y="10" width="1" height="1" fill="#000"/><rect x="1" y="11" width="12" height="1" fill="#000"/></svg>
<svg class="a" style="left:193px;top:56px" width="10" height="14" viewBox="0 0 10 14" shape-rendering="crispEdges"><rect x="1" y="0" width="7" height="1" fill="#000"/><rect x="0" y="1" width="2" height="1" fill="#000"/><rect x="2" y="1" width="5" height="1" fill="#ffff00"/><rect x="7" y="1" width="2" height="1" fill="#000"/><rect x="0" y="2" width="1" height="1" fill="#000"/><rect x="1" y="2" width="2" height="1" fill="#ffff00"/><rect x="3" y="2" width="3" height="1" fill="#000"/><rect x="6" y="2" width="2" height="1" fill="#ffff00"/><rect x="8" y="2" width="1" height="1" fill="#000"/><rect x="0" y="3" width="1" height="1" fill="#000"/><rect x="1" y="3" width="2" height="1" fill="#ffff00"/><rect x="3" y="3" width="1" height="1" fill="#000"/><rect x="5" y="3" width="1" height="1" fill="#000"/><rect x="6" y="3" width="2" height="1" fill="#ffff00"/><rect x="8" y="3" width="1" height="1" fill="#000"/><rect x="0" y="4" width="4" height="1" fill="#000"/><rect x="5" y="4" width="1" height="1" fill="#000"/><rect x="6" y="4" width="2" height="1" fill="#ffff00"/><rect x="8" y="4" width="1" height="1" fill="#000"/><rect x="4" y="5" width="1" height="1" fill="#000"/><rect x="5" y="5" width="2" height="1" fill="#ffff00"/><rect x="7" y="5" width="2" height="1" fill="#000"/><rect x="3" y="6" width="1" height="1" fill="#000"/><rect x="4" y="6" width="2" height="1" fill="#ffff00"/><rect x="6" y="6" width="2" height="1" fill="#000"/><rect x="3" y="7" width="1" height="1" fill="#000"/><rect x="4" y="7" width="2" height="1" fill="#ffff00"/><rect x="6" y="7" width="1" height="1" fill="#000"/><rect x="3" y="8" width="1" height="1" fill="#000"/><rect x="4" y="8" width="2" height="1" fill="#ffff00"/><rect x="6" y="8" width="1" height="1" fill="#000"/><rect x="3" y="9" width="4" height="1" fill="#000"/><rect x="2" y="10" width="2" height="1" fill="#000"/><rect x="4" y="10" width="2" height="1" fill="#ffff00"/><rect x="6" y="10" width="2" height="1" fill="#000"/><rect x="2" y="11" width="1" height="1" fill="#000"/><rect x="3" y="11" width="4" height="1" fill="#ffff00"/><rect x="7" y="11" width="1" height="1" fill="#000"/><rect x="2" y="12" width="2" height="1" fill="#000"/><rect x="4" y="12" width="2" height="1" fill="#ffff00"/><rect x="6" y="12" width="2" height="1" fill="#000"/><rect x="3" y="13" width="4" height="1" fill="#000"/></svg>
<svg class="a" style="left:213px;top:56px" width="8" height="14" viewBox="0 0 8 14" shape-rendering="crispEdges"><rect x="0" y="0" width="1" height="1" fill="#000"/><rect x="0" y="1" width="2" height="1" fill="#000"/><rect x="0" y="2" width="3" height="1" fill="#000"/><rect x="0" y="3" width="4" height="1" fill="#000"/><rect x="0" y="4" width="5" height="1" fill="#000"/><rect x="0" y="5" width="6" height="1" fill="#000"/><rect x="0" y="6" width="7" height="1" fill="#000"/><rect x="0" y="7" width="8" height="1" fill="#000"/><rect x="0" y="8" width="5" height="1" fill="#000"/><rect x="0" y="9" width="2" height="1" fill="#000"/><rect x="3" y="9" width="3" height="1" fill="#000"/><rect x="0" y="10" width="1" height="1" fill="#000"/><rect x="3" y="10" width="3" height="1" fill="#000"/><rect x="4" y="11" width="3" height="1" fill="#000"/><rect x="4" y="12" width="3" height="1" fill="#000"/><rect x="5" y="13" width="1" height="1" fill="#000"/></svg>
<svg class="a" style="left:220px;top:56px" width="9" height="12" viewBox="0 0 9 12" shape-rendering="crispEdges"><rect x="2" y="0" width="5" height="1" fill="#000080"/><rect x="1" y="1" width="7" height="1" fill="#000080"/><rect x="0" y="2" width="3" height="1" fill="#000080"/><rect x="6" y="2" width="3" height="1" fill="#000080"/><rect x="0" y="3" width="3" height="1" fill="#000080"/><rect x="6" y="3" width="3" height="1" fill="#000080"/><rect x="6" y="4" width="3" height="1" fill="#000080"/><rect x="5" y="5" width="3" height="1" fill="#000080"/><rect x="4" y="6" width="3" height="1" fill="#000080"/><rect x="3" y="7" width="3" height="1" fill="#000080"/><rect x="3" y="8" width="3" height="1" fill="#000080"/><rect x="3" y="10" width="4" height="1" fill="#000080"/><rect x="3" y="11" width="4" height="1" fill="#000080"/></svg>
<svg class="a" style="left:243px;top:56px" width="13" height="14" viewBox="0 0 13 14" shape-rendering="crispEdges"><rect x="6" y="0" width="1" height="1" fill="#000080"/><rect x="5" y="1" width="3" height="1" fill="#000080"/><rect x="4" y="2" width="5" height="1" fill="#000080"/><rect x="3" y="3" width="7" height="1" fill="#000080"/><rect x="2" y="4" width="9" height="1" fill="#000080"/><rect x="1" y="5" width="11" height="1" fill="#000080"/><rect x="0" y="6" width="13" height="1" fill="#000080"/><rect x="4" y="7" width="5" height="1" fill="#000080"/><rect x="4" y="8" width="5" height="1" fill="#000080"/><rect x="4" y="9" width="5" height="1" fill="#000080"/><rect x="4" y="10" width="5" height="1" fill="#000080"/><rect x="4" y="11" width="5" height="1" fill="#000080"/><rect x="4" y="12" width="5" height="1" fill="#000080"/><rect x="4" y="13" width="5" height="1" fill="#000080"/></svg>
<svg class="a" style="left:266px;top:56px" width="13" height="14" viewBox="0 0 13 14" shape-rendering="crispEdges"><rect x="4" y="0" width="5" height="1" fill="#000080"/><rect x="4" y="1" width="5" height="1" fill="#000080"/><rect x="4" y="2" width="5" height="1" fill="#000080"/><rect x="4" y="3" width="5" height="1" fill="#000080"/><rect x="4" y="4" width="5" height="1" fill="#000080"/><rect x="4" y="5" width="5" height="1" fill="#000080"/><rect x="4" y="6" width="5" height="1" fill="#000080"/><rect x="0" y="7" width="13" height="1" fill="#000080"/><rect x="1" y="8" width="11" height="1" fill="#000080"/><rect x="2" y="9" width="9" height="1" fill="#000080"/><rect x="3" y="10" width="7" height="1" fill="#000080"/><rect x="4" y="11" width="5" height="1" fill="#000080"/><rect x="5" y="12" width="3" height="1" fill="#000080"/><rect x="6" y="13" width="1" height="1" fill="#000080"/></svg>
<svg class="a" style="left:294px;top:56px" width="16" height="15" viewBox="0 0 16 15" shape-rendering="crispEdges"><rect x="0" y="0" width="16" height="1" fill="#000080"/><rect x="0" y="1" width="16" height="1" fill="#000080"/><rect x="0" y="2" width="16" height="1" fill="#00ff00"/><rect x="0" y="3" width="16" height="1" fill="#00ff00"/><rect x="0" y="4" width="2" height="1" fill="#00ff00"/><rect x="2" y="4" width="2" height="1" fill="#000"/><rect x="4" y="4" width="9" height="1" fill="#00ff00"/><rect x="13" y="4" width="1" height="1" fill="#000"/><rect x="14" y="4" width="2" height="1" fill="#00ff00"/><rect x="0" y="5" width="1" height="1" fill="#00ff00"/><rect x="1" y="5" width="1" height="1" fill="#000"/><rect x="2" y="5" width="2" height="1" fill="#00ff00"/><rect x="4" y="5" width="1" height="1" fill="#000"/><rect x="5" y="5" width="8" height="1" fill="#00ff00"/><rect x="13" y="5" width="1" height="1" fill="#000"/><rect x="14" y="5" width="1" height="1" fill="#008080"/><rect x="15" y="5" width="1" height="1" fill="#00ff00"/><rect x="0" y="6" width="1" height="1" fill="#00ff00"/><rect x="1" y="6" width="1" height="1" fill="#000"/><rect x="2" y="6" width="5" height="1" fill="#00ff00"/><rect x="7" y="6" width="3" height="1" fill="#000"/><rect x="10" y="6" width="3" height="1" fill="#00ff00"/><rect x="13" y="6" width="1" height="1" fill="#000"/><rect x="14" y="6" width="1" height="1" fill="#008080"/><rect x="15" y="6" width="1" height="1" fill="#00ff00"/><rect x="0" y="7" width="1" height="1" fill="#00ff00"/><rect x="1" y="7" width="1" height="1" fill="#000"/><rect x="2" y="7" width="1" height="1" fill="#008080"/><rect x="3" y="7" width="5" height="1" fill="#00ff00"/><rect x="8" y="7" width="2" height="1" fill="#008080"/><rect x="10" y="7" width="1" height="1" fill="#000"/><rect x="11" y="7" width="2" height="1" fill="#00ff00"/><rect x="13" y="7" width="1" height="1" fill="#000"/><rect x="14" y="7" width="1" height="1" fill="#008080"/><rect x="15" y="7" width="1" height="1" fill="#00ff00"/><rect x="0" y="8" width="1" height="1" fill="#00ff00"/><rect x="1" y="8" width="1" height="1" fill="#000"/><rect x="2" y="8" width="1" height="1" fill="#008080"/><rect x="3" y="8" width="4" height="1" fill="#00ff00"/><rect x="7" y="8" width="4" height="1" fill="#000"/><rect x="11" y="8" width="1" height="1" fill="#008080"/><rect x="12" y="8" width="1" height="1" fill="#00ff00"/><rect x="13" y="8" width="1" height="1" fill="#000"/><rect x="14" y="8" width="1" height="1" fill="#008080"/><rect x="15" y="8" width="1" height="1" fill="#00ff00"/><rect x="0" y="9" width="1" height="1" fill="#00ff00"/><rect x="1" y="9" width="1" height="1" fill="#000"/><rect x="2" y="9" width="1" height="1" fill="#008080"/><rect x="3" y="9" width="1" height="1" fill="#00ff00"/><rect x="4" y="9" width="1" height="1" fill="#000"/><rect x="5" y="9" width="2" height="1" fill="#008080"/><rect x="7" y="9" width="1" height="1" fill="#000"/><rect x="8" y="9" width="2" height="1" fill="#00ff00"/><rect x="10" y="9" width="1" height="1" fill="#000"/><rect x="11" y="9" width="1" height="1" fill="#008080"/><rect x="12" y="9" width="1" height="1" fill="#00ff00"/><rect x="13" y="9" width="1" height="1" fill="#000"/><rect x="14" y="9" width="1" height="1" fill="#008080"/><rect x="15" y="9" width="1" height="1" fill="#00ff00"/><rect x="0" y="10" width="2" height="1" fill="#00ff00"/><rect x="2" y="10" width="2" height="1" fill="#000"/><rect x="4" y="10" width="2" height="1" fill="#008080"/><rect x="6" y="10" width="1" height="1" fill="#00ff00"/><rect x="7" y="10" width="4" height="1" fill="#000"/><rect x="11" y="10" width="1" height="1" fill="#008080"/><rect x="12" y="10" width="1" height="1" fill="#00ff00"/><rect x="13" y="10" width="1" height="1" fill="#000"/><rect x="14" y="10" width="1" height="1" fill="#008080"/><rect x="15" y="10" width="1" height="1" fill="#00ff00"/><rect x="0" y="11" width="3" height="1" fill="#00ff00"/><rect x="3" y="11" width="2" height="1" fill="#008080"/><rect x="5" y="11" width="3" height="1" fill="#00ff00"/><rect x="8" y="11" width="4" height="1" fill="#008080"/><rect x="12" y="11" width="2" height="1" fill="#00ff00"/><rect x="14" y="11" width="1" height="1" fill="#008080"/><rect x="15" y="11" width="1" height="1" fill="#00ff00"/><rect x="0" y="12" width="16" height="1" fill="#00ff00"/><rect x="0" y="13" width="16" height="1" fill="#000080"/><rect x="0" y="14" width="16" height="1" fill="#000080"/></svg>
<svg class="a" style="left:323px;top:56px" width="16" height="15" viewBox="0 0 16 15" shape-rendering="crispEdges"><rect x="0" y="0" width="14" height="1" fill="#a0a0a0"/><rect x="0" y="1" width="14" height="1" fill="#a0a0a0"/><rect x="0" y="2" width="14" height="1" fill="#a0a0a0"/><rect x="0" y="3" width="14" height="1" fill="#a0a0a0"/><rect x="0" y="4" width="14" height="1" fill="#a0a0a0"/><rect x="0" y="5" width="14" height="1" fill="#a0a0a0"/><rect x="0" y="6" width="14" height="1" fill="#a0a0a0"/><rect x="0" y="7" width="14" height="1" fill="#a0a0a0"/><rect x="0" y="8" width="10" height="1" fill="#a0a0a0"/><rect x="11" y="8" width="1" height="1" fill="#a0a0a0"/><rect x="13" y="8" width="1" height="1" fill="#a0a0a0"/><rect x="15" y="8" width="1" height="1" fill="#a0a0a0"/><rect x="0" y="9" width="9" height="1" fill="#a0a0a0"/><rect x="15" y="9" width="1" height="1" fill="#a0a0a0"/><rect x="0" y="10" width="8" height="1" fill="#a0a0a0"/><rect x="0" y="11" width="9" height="1" fill="#a0a0a0"/><rect x="15" y="11" width="1" height="1" fill="#a0a0a0"/><rect x="0" y="12" width="9" height="1" fill="#a0a0a0"/><rect x="15" y="12" width="1" height="1" fill="#a0a0a0"/><rect x="0" y="13" width="8" height="1" fill="#a0a0a0"/><rect x="9" y="13" width="1" height="1" fill="#a0a0a0"/><rect x="12" y="13" width="1" height="1" fill="#a0a0a0"/><rect x="15" y="13" width="1" height="1" fill="#a0a0a0"/><rect x="9" y="14" width="2" height="1" fill="#a0a0a0"/><rect x="12" y="14" width="3" height="1" fill="#a0a0a0"/></svg>
<svg class="a" style="left:346px;top:56px" width="17" height="15" viewBox="0 0 17 15" shape-rendering="crispEdges"><rect x="0" y="0" width="3" height="1" fill="#a0a0a0"/><rect x="4" y="0" width="3" height="1" fill="#a0a0a0"/><rect x="8" y="0" width="3" height="1" fill="#a0a0a0"/><rect x="12" y="0" width="2" height="1" fill="#a0a0a0"/><rect x="0" y="1" width="1" height="1" fill="#a0a0a0"/><rect x="13" y="1" width="1" height="1" fill="#a0a0a0"/><rect x="3" y="2" width="1" height="1" fill="#a0a0a0"/><rect x="4" y="2" width="1" height="1" fill="#fff"/><rect x="0" y="3" width="1" height="1" fill="#a0a0a0"/><rect x="4" y="3" width="1" height="1" fill="#a0a0a0"/><rect x="5" y="3" width="1" height="1" fill="#fff"/><rect x="13" y="3" width="1" height="1" fill="#a0a0a0"/><rect x="0" y="4" width="1" height="1" fill="#a0a0a0"/><rect x="5" y="4" width="1" height="1" fill="#a0a0a0"/><rect x="6" y="4" width="1" height="1" fill="#fff"/><rect x="8" y="4" width="1" height="1" fill="#a0a0a0"/><rect x="13" y="4" width="1" height="1" fill="#a0a0a0"/><rect x="6" y="5" width="2" height="1" fill="#a0a0a0"/><rect x="8" y="5" width="1" height="1" fill="#fff"/><rect x="0" y="6" width="1" height="1" fill="#a0a0a0"/><rect x="5" y="6" width="3" height="1" fill="#a0a0a0"/><rect x="8" y="6" width="1" height="1" fill="#fff"/><rect x="13" y="6" width="1" height="1" fill="#a0a0a0"/><rect x="0" y="7" width="1" height="1" fill="#a0a0a0"/><rect x="8" y="8" width="8" height="1" fill="#a0a0a0"/><rect x="0" y="9" width="1" height="1" fill="#a0a0a0"/><rect x="8" y="9" width="8" height="1" fill="#a0a0a0"/><rect x="0" y="10" width="1" height="1" fill="#a0a0a0"/><rect x="8" y="10" width="8" height="1" fill="#a0a0a0"/><rect x="8" y="11" width="8" height="1" fill="#a0a0a0"/><rect x="0" y="12" width="1" height="1" fill="#a0a0a0"/><rect x="8" y="12" width="8" height="1" fill="#a0a0a0"/><rect x="0" y="13" width="2" height="1" fill="#a0a0a0"/><rect x="3" y="13" width="2" height="1" fill="#a0a0a0"/><rect x="6" y="13" width="10" height="1" fill="#a0a0a0"/><rect x="8" y="14" width="8" height="1" fill="#a0a0a0"/></svg>
<div class="a" style="left:1px;top:75px;width:204px;height:618px;background:#fff;border-top:1px solid #a0a0a0;border-left:1px solid #a0a0a0;border-right:1px solid #fff;border-bottom:1px solid #fff"></div>
<div class="a" style="left:2px;top:76px;width:202px;height:616px;border-top:1px solid #696969;border-left:1px solid #696969;border-right:1px solid #e3e3e3;border-bottom:1px solid #e3e3e3"></div>
<div class="dl" style="left:11px;top:91px;height:231px"></div>
<div class="dl" style="left:30px;top:95px;height:118px"></div>
<div class="dl" style="left:30px;top:275px;height:29px"></div>
<div class="dl" style="left:49px;top:167px;height:29px"></div>
<div class="dl" style="left:49px;top:221px;height:29px"></div>
<svg class="a" style="left:21px;top:79px" width="17" height="13" viewBox="0 0 17 13" shape-rendering="crispEdges"><rect x="4" y="0" width="5" height="1" fill="#808080"/><rect x="3" y="1" width="1" height="1" fill="#808080"/><rect x="4" y="1" width="5" height="1" fill="#fff"/><rect x="9" y="1" width="1" height="1" fill="#808080"/><rect x="2" y="2" width="1" height="1" fill="#808080"/><rect x="3" y="2" width="1" height="1" fill="#fff"/><rect x="4" y="2" width="1" height="1" fill="#ffff00"/><rect x="5" y="2" width="1" height="1" fill="#c8c8c8"/><rect x="6" y="2" width="1" height="1" fill="#ffff00"/><rect x="7" y="2" width="1" height="1" fill="#c8c8c8"/><rect x="8" y="2" width="1" height="1" fill="#ffff00"/><rect x="9" y="2" width="1" height="1" fill="#fff"/><rect x="10" y="2" width="6" height="1" fill="#808080"/><rect x="2" y="3" width="1" height="1" fill="#808080"/><rect x="3" y="3" width="1" height="1" fill="#ffff00"/><rect x="4" y="3" width="1" height="1" fill="#c8c8c8"/><rect x="5" y="3" width="1" height="1" fill="#ffff00"/><rect x="6" y="3" width="1" height="1" fill="#c8c8c8"/><rect x="7" y="3" width="1" height="1" fill="#ffff00"/><rect x="8" y="3" width="1" height="1" fill="#c8c8c8"/><rect x="9" y="3" width="1" height="1" fill="#ffff00"/><rect x="10" y="3" width="1" height="1" fill="#c8c8c8"/><rect x="11" y="3" width="1" height="1" fill="#ffff00"/><rect x="12" y="3" width="1" height="1" fill="#c8c8c8"/><rect x="13" y="3" width="1" height="1" fill="#ffff00"/><rect x="14" y="3" width="1" height="1" fill="#c8c8c8"/><rect x="15" y="3" width="1" height="1" fill="#fff"/><rect x="16" y="3" width="1" height="1" fill="#000"/><rect x="2" y="4" width="1" height="1" fill="#808080"/><rect x="3" y="4" width="1" height="1" fill="#c8c8c8"/><rect x="4" y="4" width="1" height="1" fill="#ffff00"/><rect x="5" y="4" width="1" height="1" fill="#c8c8c8"/><rect x="6" y="4" width="1" height="1" fill="#ffff00"/><rect x="7" y="4" width="1" height="1" fill="#c8c8c8"/><rect x="8" y="4" width="1" height="1" fill="#ffff00"/><rect x="9" y="4" width="1" height="1" fill="#c8c8c8"/><rect x="10" y="4" width="1" height="1" fill="#ffff00"/><rect x="11" y="4" width="1" height="1" fill="#c8c8c8"/><rect x="12" y="4" width="1" height="1" fill="#ffff00"/><rect x="13" y="4" width="1" height="1" fill="#c8c8c8"/><rect x="14" y="4" width="1" height="1" fill="#ffff00"/><rect x="15" y="4" width="1" height="1" fill="#808080"/><rect x="16" y="4" width="1" height="1" fill="#000"/><rect x="1" y="5" width="13" height="1" fill="#808080"/><rect x="14" y="5" width="1" height="1" fill="#c8c8c8"/><rect x="15" y="5" width="1" height="1" fill="#808080"/><rect x="16" y="5" width="1" height="1" fill="#000"/><rect x="0" y="6" width="1" height="1" fill="#808080"/><rect x="1" y="6" width="2" height="1" fill="#fff"/><rect x="3" y="6" width="1" height="1" fill="#c8c8c8"/><rect x="4" y="6" width="1" height="1" fill="#ffff00"/><rect x="5" y="6" width="1" height="1" fill="#c8c8c8"/><rect x="6" y="6" width="1" height="1" fill="#ffff00"/><rect x="7" y="6" width="1" height="1" fill="#c8c8c8"/><rect x="8" y="6" width="1" height="1" fill="#ffff00"/><rect x="9" y="6" width="1" height="1" fill="#c8c8c8"/><rect x="10" y="6" width="1" height="1" fill="#ffff00"/><rect x="11" y="6" width="1" height="1" fill="#c8c8c8"/><rect x="12" y="6" width="1" height="1" fill="#ffff00"/><rect x="13" y="6" width="1" height="1" fill="#000"/><rect x="14" y="6" width="1" height="1" fill="#ffff00"/><rect x="15" y="6" width="1" height="1" fill="#808080"/><rect x="16" y="6" width="1" height="1" fill="#000"/><rect x="1" y="7" width="1" height="1" fill="#808080"/><rect x="2" y="7" width="1" height="1" fill="#fff"/><rect x="3" y="7" width="1" height="1" fill="#ffff00"/><rect x="4" y="7" width="1" height="1" fill="#c8c8c8"/><rect x="5" y="7" width="1" height="1" fill="#ffff00"/><rect x="6" y="7" width="1" height="1" fill="#c8c8c8"/><rect x="7" y="7" width="1" height="1" fill="#ffff00"/><rect x="8" y="7" width="1" height="1" fill="#c8c8c8"/><rect x="9" y="7" width="1" height="1" fill="#ffff00"/><rect x="10" y="7" width="1" height="1" fill="#c8c8c8"/><rect x="11" y="7" width="1" height="1" fill="#ffff00"/><rect x="12" y="7" width="1" height="1" fill="#c8c8c8"/><rect x="13" y="7" width="1" height="1" fill="#ffff00"/><rect x="14" y="7" width="1" height="1" fill="#000"/><rect x="15" y="7" width="1" height="1" fill="#808080"/><rect x="16" y="7" width="1" height="1" fill="#000"/><rect x="2" y="8" width="1" height="1" fill="#808080"/><rect x="3" y="8" width="1" height="1" fill="#fff"/><rect x="4" y="8" width="1" height="1" fill="#ffff00"/><rect x="5" y="8" width="1" height="1" fill="#c8c8c8"/><rect x="6" y="8" width="1" height="1" fill="#ffff00"/><rect x="7" y="8" width="1" height="1" fill="#c8c8c8"/><rect x="8" y="8" width="1" height="1" fill="#ffff00"/><rect x="9" y="8" width="1" height="1" fill="#c8c8c8"/><rect x="10" y="8" width="1" height="1" fill="#ffff00"/><rect x="11" y="8" width="1" height="1" fill="#c8c8c8"/><rect x="12" y="8" width="1" height="1" fill="#ffff00"/><rect x="13" y="8" width="1" height="1" fill="#c8c8c8"/><rect x="14" y="8" width="1" height="1" fill="#000"/><rect x="15" y="8" width="1" height="1" fill="#808080"/><rect x="16" y="8" width="1" height="1" fill="#000"/><rect x="2" y="9" width="1" height="1" fill="#808080"/><rect x="3" y="9" width="1" height="1" fill="#fff"/><rect x="4" y="9" width="1" height="1" fill="#c8c8c8"/><rect x="5" y="9" width="1" height="1" fill="#ffff00"/><rect x="6" y="9" width="1" height="1" fill="#c8c8c8"/><rect x="7" y="9" width="1" height="1" fill="#ffff00"/><rect x="8" y="9" width="1" height="1" fill="#c8c8c8"/><rect x="9" y="9" width="1" height="1" fill="#ffff00"/><rect x="10" y="9" width="1" height="1" fill="#c8c8c8"/><rect x="11" y="9" width="1" height="1" fill="#ffff00"/><rect x="12" y="9" width="1" height="1" fill="#c8c8c8"/><rect x="13" y="9" width="1" height="1" fill="#ffff00"/><rect x="14" y="9" width="1" height="1" fill="#c8c8c8"/><rect x="15" y="9" width="2" height="1" fill="#000"/><rect x="3" y="10" width="1" height="1" fill="#808080"/><rect x="4" y="10" width="1" height="1" fill="#ffff00"/><rect x="5" y="10" width="1" height="1" fill="#c8c8c8"/><rect x="6" y="10" width="1" height="1" fill="#ffff00"/><rect x="7" y="10" width="1" height="1" fill="#c8c8c8"/><rect x="8" y="10" width="1" height="1" fill="#ffff00"/><rect x="9" y="10" width="1" height="1" fill="#c8c8c8"/><rect x="10" y="10" width="1" height="1" fill="#ffff00"/><rect x="11" y="10" width="1" height="1" fill="#c8c8c8"/><rect x="12" y="10" width="1" height="1" fill="#ffff00"/><rect x="13" y="10" width="1" height="1" fill="#c8c8c8"/><rect x="14" y="10" width="1" height="1" fill="#ffff00"/><rect x="15" y="10" width="1" height="1" fill="#808080"/><rect x="16" y="10" width="1" height="1" fill="#000"/><rect x="3" y="11" width="13" height="1" fill="#808080"/><rect x="16" y="11" width="1" height="1" fill="#000"/><rect x="4" y="12" width="13" height="1" fill="#000"/></svg>
<div class="a" style="left:7px;top:81px;width:9px;height:9px;border:1px solid #808080;background:#fff"></div>
<div class="a" style="left:9px;top:85px;width:5px;height:1px;background:#000"></div>
<div class="dh" style="left:17px;top:85px;width:4px"></div>
<div class="t" style="left:43px;top:80px;font-size:12px">入力</div>
<svg class="a" style="left:43px;top:97px" width="12" height="14" viewBox="0 0 12 14" shape-rendering="crispEdges"><rect x="0" y="0" width="9" height="1" fill="#000"/><rect x="0" y="1" width="1" height="1" fill="#000"/><rect x="1" y="1" width="7" height="1" fill="#fff"/><rect x="8" y="1" width="2" height="1" fill="#000"/><rect x="0" y="2" width="1" height="1" fill="#000"/><rect x="1" y="2" width="7" height="1" fill="#fff"/><rect x="8" y="2" width="1" height="1" fill="#000"/><rect x="9" y="2" width="1" height="1" fill="#fff"/><rect x="10" y="2" width="1" height="1" fill="#000"/><rect x="0" y="3" width="1" height="1" fill="#000"/><rect x="1" y="3" width="7" height="1" fill="#fff"/><rect x="8" y="3" width="4" height="1" fill="#000"/><rect x="0" y="4" width="1" height="1" fill="#000"/><rect x="1" y="4" width="2" height="1" fill="#fff"/><rect x="3" y="4" width="4" height="1" fill="#0000ff"/><rect x="7" y="4" width="4" height="1" fill="#fff"/><rect x="11" y="4" width="1" height="1" fill="#000"/><rect x="0" y="5" width="1" height="1" fill="#000"/><rect x="1" y="5" width="10" height="1" fill="#fff"/><rect x="11" y="5" width="1" height="1" fill="#000"/><rect x="0" y="6" width="1" height="1" fill="#000"/><rect x="1" y="6" width="2" height="1" fill="#fff"/><rect x="3" y="6" width="6" height="1" fill="#0000ff"/><rect x="9" y="6" width="2" height="1" fill="#fff"/><rect x="11" y="6" width="1" height="1" fill="#000"/><rect x="0" y="7" width="1" height="1" fill="#000"/><rect x="1" y="7" width="10" height="1" fill="#fff"/><rect x="11" y="7" width="1" height="1" fill="#000"/><rect x="0" y="8" width="1" height="1" fill="#000"/><rect x="1" y="8" width="2" height="1" fill="#fff"/><rect x="3" y="8" width="6" height="1" fill="#0000ff"/><rect x="9" y="8" width="2" height="1" fill="#fff"/><rect x="11" y="8" width="1" height="1" fill="#000"/><rect x="0" y="9" width="1" height="1" fill="#000"/><rect x="1" y="9" width="10" height="1" fill="#fff"/><rect x="11" y="9" width="1" height="1" fill="#000"/><rect x="0" y="10" width="1" height="1" fill="#000"/><rect x="1" y="10" width="2" height="1" fill="#fff"/><rect x="3" y="10" width="6" height="1" fill="#0000ff"/><rect x="9" y="10" width="2" height="1" fill="#fff"/><rect x="11" y="10" width="1" height="1" fill="#000"/><rect x="0" y="11" width="1" height="1" fill="#000"/><rect x="1" y="11" width="10" height="1" fill="#fff"/><rect x="11" y="11" width="1" height="1" fill="#000"/><rect x="0" y="12" width="1" height="1" fill="#000"/><rect x="1" y="12" width="10" height="1" fill="#fff"/><rect x="11" y="12" width="1" height="1" fill="#000"/><rect x="0" y="13" width="12" height="1" fill="#000"/></svg>
<div class="dh" style="left:31px;top:105px;width:10px"></div>
<div class="t" style="left:62px;top:98px;font-size:12px">基本条件＆材料登録</div>
<svg class="a" style="left:43px;top:115px" width="12" height="14" viewBox="0 0 12 14" shape-rendering="crispEdges"><rect x="0" y="0" width="9" height="1" fill="#000"/><rect x="0" y="1" width="1" height="1" fill="#000"/><rect x="1" y="1" width="7" height="1" fill="#fff"/><rect x="8" y="1" width="2" height="1" fill="#000"/><rect x="0" y="2" width="1" height="1" fill="#000"/><rect x="1" y="2" width="7" height="1" fill="#fff"/><rect x="8" y="2" width="1" height="1" fill="#000"/><rect x="9" y="2" width="1" height="1" fill="#fff"/><rect x="10" y="2" width="1" height="1" fill="#000"/><rect x="0" y="3" width="1" height="1" fill="#000"/><rect x="1" y="3" width="7" height="1" fill="#fff"/><rect x="8" y="3" width="4" height="1" fill="#000"/><rect x="0" y="4" width="1" height="1" fill="#000"/><rect x="1" y="4" width="2" height="1" fill="#fff"/><rect x="3" y="4" width="4" height="1" fill="#0000ff"/><rect x="7" y="4" width="4" height="1" fill="#fff"/><rect x="11" y="4" width="1" height="1" fill="#000"/><rect x="0" y="5" width="1" height="1" fill="#000"/><rect x="1" y="5" width="10" height="1" fill="#fff"/><rect x="11" y="5" width="1" height="1" fill="#000"/><rect x="0" y="6" width="1" height="1" fill="#000"/><rect x="1" y="6" width="2" height="1" fill="#fff"/><rect x="3" y="6" width="6" height="1" fill="#0000ff"/><rect x="9" y="6" width="2" height="1" fill="#fff"/><rect x="11" y="6" width="1" height="1" fill="#000"/><rect x="0" y="7" width="1" height="1" fill="#000"/><rect x="1" y="7" width="10" height="1" fill="#fff"/><rect x="11" y="7" width="1" height="1" fill="#000"/><rect x="0" y="8" width="1" height="1" fill="#000"/><rect x="1" y="8" width="2" height="1" fill="#fff"/><rect x="3" y="8" width="6" height="1" fill="#0000ff"/><rect x="9" y="8" width="2" height="1" fill="#fff"/><rect x="11" y="8" width="1" height="1" fill="#000"/><rect x="0" y="9" width="1" height="1" fill="#000"/><rect x="1" y="9" width="10" height="1" fill="#fff"/><rect x="11" y="9" width="1" height="1" fill="#000"/><rect x="0" y="10" width="1" height="1" fill="#000"/><rect x="1" y="10" width="2" height="1" fill="#fff"/><rect x="3" y="10" width="6" height="1" fill="#0000ff"/><rect x="9" y="10" width="2" height="1" fill="#fff"/><rect x="11" y="10" width="1" height="1" fill="#000"/><rect x="0" y="11" width="1" height="1" fill="#000"/><rect x="1" y="11" width="10" height="1" fill="#fff"/><rect x="11" y="11" width="1" height="1" fill="#000"/><rect x="0" y="12" width="1" height="1" fill="#000"/><rect x="1" y="12" width="10" height="1" fill="#fff"/><rect x="11" y="12" width="1" height="1" fill="#000"/><rect x="0" y="13" width="12" height="1" fill="#000"/></svg>
<div class="dh" style="left:31px;top:123px;width:10px"></div>
<div class="a" style="left:60px;top:113px;width:76px;height:18px;background:#0078d7"></div>
<div class="t" style="left:62px;top:116px;font-size:12px;color:#fff">基本形状登録</div>
<svg class="a" style="left:43px;top:133px" width="12" height="14" viewBox="0 0 12 14" shape-rendering="crispEdges"><rect x="0" y="0" width="9" height="1" fill="#000"/><rect x="0" y="1" width="1" height="1" fill="#000"/><rect x="1" y="1" width="7" height="1" fill="#fff"/><rect x="8" y="1" width="2" height="1" fill="#000"/><rect x="0" y="2" width="1" height="1" fill="#000"/><rect x="1" y="2" width="7" height="1" fill="#fff"/><rect x="8" y="2" width="1" height="1" fill="#000"/><rect x="9" y="2" width="1" height="1" fill="#fff"/><rect x="10" y="2" width="1" height="1" fill="#000"/><rect x="0" y="3" width="1" height="1" fill="#000"/><rect x="1" y="3" width="7" height="1" fill="#fff"/><rect x="8" y="3" width="4" height="1" fill="#000"/><rect x="0" y="4" width="1" height="1" fill="#000"/><rect x="1" y="4" width="2" height="1" fill="#fff"/><rect x="3" y="4" width="4" height="1" fill="#0000ff"/><rect x="7" y="4" width="4" height="1" fill="#fff"/><rect x="11" y="4" width="1" height="1" fill="#000"/><rect x="0" y="5" width="1" height="1" fill="#000"/><rect x="1" y="5" width="10" height="1" fill="#fff"/><rect x="11" y="5" width="1" height="1" fill="#000"/><rect x="0" y="6" width="1" height="1" fill="#000"/><rect x="1" y="6" width="2" height="1" fill="#fff"/><rect x="3" y="6" width="6" height="1" fill="#0000ff"/><rect x="9" y="6" width="2" height="1" fill="#fff"/><rect x="11" y="6" width="1" height="1" fill="#000"/><rect x="0" y="7" width="1" height="1" fill="#000"/><rect x="1" y="7" width="10" height="1" fill="#fff"/><rect x="11" y="7" width="1" height="1" fill="#000"/><rect x="0" y="8" width="1" height="1" fill="#000"/><rect x="1" y="8" width="2" height="1" fill="#fff"/><rect x="3" y="8" width="6" height="1" fill="#0000ff"/><rect x="9" y="8" width="2" height="1" fill="#fff"/><rect x="11" y="8" width="1" height="1" fill="#000"/><rect x="0" y="9" width="1" height="1" fill="#000"/><rect x="1" y="9" width="10" height="1" fill="#fff"/><rect x="11" y="9" width="1" height="1" fill="#000"/><rect x="0" y="10" width="1" height="1" fill="#000"/><rect x="1" y="10" width="2" height="1" fill="#fff"/><rect x="3" y="10" width="6" height="1" fill="#0000ff"/><rect x="9" y="10" width="2" height="1" fill="#fff"/><rect x="11" y="10" width="1" height="1" fill="#000"/><rect x="0" y="11" width="1" height="1" fill="#000"/><rect x="1" y="11" width="10" height="1" fill="#fff"/><rect x="11" y="11" width="1" height="1" fill="#000"/><rect x="0" y="12" width="1" height="1" fill="#000"/><rect x="1" y="12" width="10" height="1" fill="#fff"/><rect x="11" y="12" width="1" height="1" fill="#000"/><rect x="0" y="13" width="12" height="1" fill="#000"/></svg>
<div class="dh" style="left:31px;top:141px;width:10px"></div>
<div class="t" style="left:62px;top:134px;font-size:12px">組合<span style="letter-spacing:-2.5px">せ</span>形状登録</div>
<svg class="a" style="left:40px;top:151px" width="17" height="13" viewBox="0 0 17 13" shape-rendering="crispEdges"><rect x="4" y="0" width="5" height="1" fill="#808080"/><rect x="3" y="1" width="1" height="1" fill="#808080"/><rect x="4" y="1" width="5" height="1" fill="#fff"/><rect x="9" y="1" width="1" height="1" fill="#808080"/><rect x="2" y="2" width="1" height="1" fill="#808080"/><rect x="3" y="2" width="1" height="1" fill="#fff"/><rect x="4" y="2" width="1" height="1" fill="#ffff00"/><rect x="5" y="2" width="1" height="1" fill="#c8c8c8"/><rect x="6" y="2" width="1" height="1" fill="#ffff00"/><rect x="7" y="2" width="1" height="1" fill="#c8c8c8"/><rect x="8" y="2" width="1" height="1" fill="#ffff00"/><rect x="9" y="2" width="1" height="1" fill="#fff"/><rect x="10" y="2" width="6" height="1" fill="#808080"/><rect x="2" y="3" width="1" height="1" fill="#808080"/><rect x="3" y="3" width="1" height="1" fill="#ffff00"/><rect x="4" y="3" width="1" height="1" fill="#c8c8c8"/><rect x="5" y="3" width="1" height="1" fill="#ffff00"/><rect x="6" y="3" width="1" height="1" fill="#c8c8c8"/><rect x="7" y="3" width="1" height="1" fill="#ffff00"/><rect x="8" y="3" width="1" height="1" fill="#c8c8c8"/><rect x="9" y="3" width="1" height="1" fill="#ffff00"/><rect x="10" y="3" width="1" height="1" fill="#c8c8c8"/><rect x="11" y="3" width="1" height="1" fill="#ffff00"/><rect x="12" y="3" width="1" height="1" fill="#c8c8c8"/><rect x="13" y="3" width="1" height="1" fill="#ffff00"/><rect x="14" y="3" width="1" height="1" fill="#c8c8c8"/><rect x="15" y="3" width="1" height="1" fill="#fff"/><rect x="16" y="3" width="1" height="1" fill="#000"/><rect x="2" y="4" width="1" height="1" fill="#808080"/><rect x="3" y="4" width="1" height="1" fill="#c8c8c8"/><rect x="4" y="4" width="1" height="1" fill="#ffff00"/><rect x="5" y="4" width="1" height="1" fill="#c8c8c8"/><rect x="6" y="4" width="1" height="1" fill="#ffff00"/><rect x="7" y="4" width="1" height="1" fill="#c8c8c8"/><rect x="8" y="4" width="1" height="1" fill="#ffff00"/><rect x="9" y="4" width="1" height="1" fill="#c8c8c8"/><rect x="10" y="4" width="1" height="1" fill="#ffff00"/><rect x="11" y="4" width="1" height="1" fill="#c8c8c8"/><rect x="12" y="4" width="1" height="1" fill="#ffff00"/><rect x="13" y="4" width="1" height="1" fill="#c8c8c8"/><rect x="14" y="4" width="1" height="1" fill="#ffff00"/><rect x="15" y="4" width="1" height="1" fill="#808080"/><rect x="16" y="4" width="1" height="1" fill="#000"/><rect x="1" y="5" width="13" height="1" fill="#808080"/><rect x="14" y="5" width="1" height="1" fill="#c8c8c8"/><rect x="15" y="5" width="1" height="1" fill="#808080"/><rect x="16" y="5" width="1" height="1" fill="#000"/><rect x="0" y="6" width="1" height="1" fill="#808080"/><rect x="1" y="6" width="2" height="1" fill="#fff"/><rect x="3" y="6" width="1" height="1" fill="#c8c8c8"/><rect x="4" y="6" width="1" height="1" fill="#ffff00"/><rect x="5" y="6" width="1" height="1" fill="#c8c8c8"/><rect x="6" y="6" width="1" height="1" fill="#ffff00"/><rect x="7" y="6" width="1" height="1" fill="#c8c8c8"/><rect x="8" y="6" width="1" height="1" fill="#ffff00"/><rect x="9" y="6" width="1" height="1" fill="#c8c8c8"/><rect x="10" y="6" width="1" height="1" fill="#ffff00"/><rect x="11" y="6" width="1" height="1" fill="#c8c8c8"/><rect x="12" y="6" width="1" height="1" fill="#ffff00"/><rect x="13" y="6" width="1" height="1" fill="#000"/><rect x="14" y="6" width="1" height="1" fill="#ffff00"/><rect x="15" y="6" width="1" height="1" fill="#808080"/><rect x="16" y="6" width="1" height="1" fill="#000"/><rect x="1" y="7" width="1" height="1" fill="#808080"/><rect x="2" y="7" width="1" height="1" fill="#fff"/><rect x="3" y="7" width="1" height="1" fill="#ffff00"/><rect x="4" y="7" width="1" height="1" fill="#c8c8c8"/><rect x="5" y="7" width="1" height="1" fill="#ffff00"/><rect x="6" y="7" width="1" height="1" fill="#c8c8c8"/><rect x="7" y="7" width="1" height="1" fill="#ffff00"/><rect x="8" y="7" width="1" height="1" fill="#c8c8c8"/><rect x="9" y="7" width="1" height="1" fill="#ffff00"/><rect x="10" y="7" width="1" height="1" fill="#c8c8c8"/><rect x="11" y="7" width="1" height="1" fill="#ffff00"/><rect x="12" y="7" width="1" height="1" fill="#c8c8c8"/><rect x="13" y="7" width="1" height="1" fill="#ffff00"/><rect x="14" y="7" width="1" height="1" fill="#000"/><rect x="15" y="7" width="1" height="1" fill="#808080"/><rect x="16" y="7" width="1" height="1" fill="#000"/><rect x="2" y="8" width="1" height="1" fill="#808080"/><rect x="3" y="8" width="1" height="1" fill="#fff"/><rect x="4" y="8" width="1" height="1" fill="#ffff00"/><rect x="5" y="8" width="1" height="1" fill="#c8c8c8"/><rect x="6" y="8" width="1" height="1" fill="#ffff00"/><rect x="7" y="8" width="1" height="1" fill="#c8c8c8"/><rect x="8" y="8" width="1" height="1" fill="#ffff00"/><rect x="9" y="8" width="1" height="1" fill="#c8c8c8"/><rect x="10" y="8" width="1" height="1" fill="#ffff00"/><rect x="11" y="8" width="1" height="1" fill="#c8c8c8"/><rect x="12" y="8" width="1" height="1" fill="#ffff00"/><rect x="13" y="8" width="1" height="1" fill="#c8c8c8"/><rect x="14" y="8" width="1" height="1" fill="#000"/><rect x="15" y="8" width="1" height="1" fill="#808080"/><rect x="16" y="8" width="1" height="1" fill="#000"/><rect x="2" y="9" width="1" height="1" fill="#808080"/><rect x="3" y="9" width="1" height="1" fill="#fff"/><rect x="4" y="9" width="1" height="1" fill="#c8c8c8"/><rect x="5" y="9" width="1" height="1" fill="#ffff00"/><rect x="6" y="9" width="1" height="1" fill="#c8c8c8"/><rect x="7" y="9" width="1" height="1" fill="#ffff00"/><rect x="8" y="9" width="1" height="1" fill="#c8c8c8"/><rect x="9" y="9" width="1" height="1" fill="#ffff00"/><rect x="10" y="9" width="1" height="1" fill="#c8c8c8"/><rect x="11" y="9" width="1" height="1" fill="#ffff00"/><rect x="12" y="9" width="1" height="1" fill="#c8c8c8"/><rect x="13" y="9" width="1" height="1" fill="#ffff00"/><rect x="14" y="9" width="1" height="1" fill="#c8c8c8"/><rect x="15" y="9" width="2" height="1" fill="#000"/><rect x="3" y="10" width="1" height="1" fill="#808080"/><rect x="4" y="10" width="1" height="1" fill="#ffff00"/><rect x="5" y="10" width="1" height="1" fill="#c8c8c8"/><rect x="6" y="10" width="1" height="1" fill="#ffff00"/><rect x="7" y="10" width="1" height="1" fill="#c8c8c8"/><rect x="8" y="10" width="1" height="1" fill="#ffff00"/><rect x="9" y="10" width="1" height="1" fill="#c8c8c8"/><rect x="10" y="10" width="1" height="1" fill="#ffff00"/><rect x="11" y="10" width="1" height="1" fill="#c8c8c8"/><rect x="12" y="10" width="1" height="1" fill="#ffff00"/><rect x="13" y="10" width="1" height="1" fill="#c8c8c8"/><rect x="14" y="10" width="1" height="1" fill="#ffff00"/><rect x="15" y="10" width="1" height="1" fill="#808080"/><rect x="16" y="10" width="1" height="1" fill="#000"/><rect x="3" y="11" width="13" height="1" fill="#808080"/><rect x="16" y="11" width="1" height="1" fill="#000"/><rect x="4" y="12" width="13" height="1" fill="#000"/></svg>
<div class="a" style="left:26px;top:153px;width:9px;height:9px;border:1px solid #808080;background:#fff"></div>
<div class="a" style="left:28px;top:157px;width:5px;height:1px;background:#000"></div>
<div class="dh" style="left:36px;top:157px;width:4px"></div>
<div class="t" style="left:62px;top:152px;font-size:12px">P1</div>
<svg class="a" style="left:62px;top:169px" width="12" height="14" viewBox="0 0 12 14" shape-rendering="crispEdges"><rect x="0" y="0" width="9" height="1" fill="#000"/><rect x="0" y="1" width="1" height="1" fill="#000"/><rect x="1" y="1" width="7" height="1" fill="#fff"/><rect x="8" y="1" width="2" height="1" fill="#000"/><rect x="0" y="2" width="1" height="1" fill="#000"/><rect x="1" y="2" width="7" height="1" fill="#fff"/><rect x="8" y="2" width="1" height="1" fill="#000"/><rect x="9" y="2" width="1" height="1" fill="#fff"/><rect x="10" y="2" width="1" height="1" fill="#000"/><rect x="0" y="3" width="1" height="1" fill="#000"/><rect x="1" y="3" width="7" height="1" fill="#fff"/><rect x="8" y="3" width="4" height="1" fill="#000"/><rect x="0" y="4" width="1" height="1" fill="#000"/><rect x="1" y="4" width="2" height="1" fill="#fff"/><rect x="3" y="4" width="4" height="1" fill="#0000ff"/><rect x="7" y="4" width="4" height="1" fill="#fff"/><rect x="11" y="4" width="1" height="1" fill="#000"/><rect x="0" y="5" width="1" height="1" fill="#000"/><rect x="1" y="5" width="10" height="1" fill="#fff"/><rect x="11" y="5" width="1" height="1" fill="#000"/><rect x="0" y="6" width="1" height="1" fill="#000"/><rect x="1" y="6" width="2" height="1" fill="#fff"/><rect x="3" y="6" width="6" height="1" fill="#0000ff"/><rect x="9" y="6" width="2" height="1" fill="#fff"/><rect x="11" y="6" width="1" height="1" fill="#000"/><rect x="0" y="7" width="1" height="1" fill="#000"/><rect x="1" y="7" width="10" height="1" fill="#fff"/><rect x="11" y="7" width="1" height="1" fill="#000"/><rect x="0" y="8" width="1" height="1" fill="#000"/><rect x="1" y="8" width="2" height="1" fill="#fff"/><rect x="3" y="8" width="6" height="1" fill="#0000ff"/><rect x="9" y="8" width="2" height="1" fill="#fff"/><rect x="11" y="8" width="1" height="1" fill="#000"/><rect x="0" y="9" width="1" height="1" fill="#000"/><rect x="1" y="9" width="10" height="1" fill="#fff"/><rect x="11" y="9" width="1" height="1" fill="#000"/><rect x="0" y="10" width="1" height="1" fill="#000"/><rect x="1" y="10" width="2" height="1" fill="#fff"/><rect x="3" y="10" width="6" height="1" fill="#0000ff"/><rect x="9" y="10" width="2" height="1" fill="#fff"/><rect x="11" y="10" width="1" height="1" fill="#000"/><rect x="0" y="11" width="1" height="1" fill="#000"/><rect x="1" y="11" width="10" height="1" fill="#fff"/><rect x="11" y="11" width="1" height="1" fill="#000"/><rect x="0" y="12" width="1" height="1" fill="#000"/><rect x="1" y="12" width="10" height="1" fill="#fff"/><rect x="11" y="12" width="1" height="1" fill="#000"/><rect x="0" y="13" width="12" height="1" fill="#000"/></svg>
<div class="dh" style="left:50px;top:177px;width:10px"></div>
<div class="t" style="left:81px;top:170px;font-size:12px">組合<span style="letter-spacing:-2.5px">せ</span>形状<span style="letter-spacing:-3.3px">デ</span><span style="letter-spacing:-3.3px">ー</span><span style="letter-spacing:-3.3px">タ</span></div>
<svg class="a" style="left:62px;top:187px" width="12" height="14" viewBox="0 0 12 14" shape-rendering="crispEdges"><rect x="0" y="0" width="9" height="1" fill="#000"/><rect x="0" y="1" width="1" height="1" fill="#000"/><rect x="1" y="1" width="7" height="1" fill="#fff"/><rect x="8" y="1" width="2" height="1" fill="#000"/><rect x="0" y="2" width="1" height="1" fill="#000"/><rect x="1" y="2" width="7" height="1" fill="#fff"/><rect x="8" y="2" width="1" height="1" fill="#000"/><rect x="9" y="2" width="1" height="1" fill="#fff"/><rect x="10" y="2" width="1" height="1" fill="#000"/><rect x="0" y="3" width="1" height="1" fill="#000"/><rect x="1" y="3" width="7" height="1" fill="#fff"/><rect x="8" y="3" width="4" height="1" fill="#000"/><rect x="0" y="4" width="1" height="1" fill="#000"/><rect x="1" y="4" width="2" height="1" fill="#fff"/><rect x="3" y="4" width="4" height="1" fill="#0000ff"/><rect x="7" y="4" width="4" height="1" fill="#fff"/><rect x="11" y="4" width="1" height="1" fill="#000"/><rect x="0" y="5" width="1" height="1" fill="#000"/><rect x="1" y="5" width="10" height="1" fill="#fff"/><rect x="11" y="5" width="1" height="1" fill="#000"/><rect x="0" y="6" width="1" height="1" fill="#000"/><rect x="1" y="6" width="2" height="1" fill="#fff"/><rect x="3" y="6" width="6" height="1" fill="#0000ff"/><rect x="9" y="6" width="2" height="1" fill="#fff"/><rect x="11" y="6" width="1" height="1" fill="#000"/><rect x="0" y="7" width="1" height="1" fill="#000"/><rect x="1" y="7" width="10" height="1" fill="#fff"/><rect x="11" y="7" width="1" height="1" fill="#000"/><rect x="0" y="8" width="1" height="1" fill="#000"/><rect x="1" y="8" width="2" height="1" fill="#fff"/><rect x="3" y="8" width="6" height="1" fill="#0000ff"/><rect x="9" y="8" width="2" height="1" fill="#fff"/><rect x="11" y="8" width="1" height="1" fill="#000"/><rect x="0" y="9" width="1" height="1" fill="#000"/><rect x="1" y="9" width="10" height="1" fill="#fff"/><rect x="11" y="9" width="1" height="1" fill="#000"/><rect x="0" y="10" width="1" height="1" fill="#000"/><rect x="1" y="10" width="2" height="1" fill="#fff"/><rect x="3" y="10" width="6" height="1" fill="#0000ff"/><rect x="9" y="10" width="2" height="1" fill="#fff"/><rect x="11" y="10" width="1" height="1" fill="#000"/><rect x="0" y="11" width="1" height="1" fill="#000"/><rect x="1" y="11" width="10" height="1" fill="#fff"/><rect x="11" y="11" width="1" height="1" fill="#000"/><rect x="0" y="12" width="1" height="1" fill="#000"/><rect x="1" y="12" width="10" height="1" fill="#fff"/><rect x="11" y="12" width="1" height="1" fill="#000"/><rect x="0" y="13" width="12" height="1" fill="#000"/></svg>
<div class="dh" style="left:50px;top:195px;width:10px"></div>
<div class="t" style="left:81px;top:188px;font-size:12px">計算条件</div>
<svg class="a" style="left:40px;top:205px" width="17" height="13" viewBox="0 0 17 13" shape-rendering="crispEdges"><rect x="4" y="0" width="5" height="1" fill="#808080"/><rect x="3" y="1" width="1" height="1" fill="#808080"/><rect x="4" y="1" width="5" height="1" fill="#fff"/><rect x="9" y="1" width="1" height="1" fill="#808080"/><rect x="2" y="2" width="1" height="1" fill="#808080"/><rect x="3" y="2" width="1" height="1" fill="#fff"/><rect x="4" y="2" width="1" height="1" fill="#ffff00"/><rect x="5" y="2" width="1" height="1" fill="#c8c8c8"/><rect x="6" y="2" width="1" height="1" fill="#ffff00"/><rect x="7" y="2" width="1" height="1" fill="#c8c8c8"/><rect x="8" y="2" width="1" height="1" fill="#ffff00"/><rect x="9" y="2" width="1" height="1" fill="#fff"/><rect x="10" y="2" width="6" height="1" fill="#808080"/><rect x="2" y="3" width="1" height="1" fill="#808080"/><rect x="3" y="3" width="1" height="1" fill="#ffff00"/><rect x="4" y="3" width="1" height="1" fill="#c8c8c8"/><rect x="5" y="3" width="1" height="1" fill="#ffff00"/><rect x="6" y="3" width="1" height="1" fill="#c8c8c8"/><rect x="7" y="3" width="1" height="1" fill="#ffff00"/><rect x="8" y="3" width="1" height="1" fill="#c8c8c8"/><rect x="9" y="3" width="1" height="1" fill="#ffff00"/><rect x="10" y="3" width="1" height="1" fill="#c8c8c8"/><rect x="11" y="3" width="1" height="1" fill="#ffff00"/><rect x="12" y="3" width="1" height="1" fill="#c8c8c8"/><rect x="13" y="3" width="1" height="1" fill="#ffff00"/><rect x="14" y="3" width="1" height="1" fill="#c8c8c8"/><rect x="15" y="3" width="1" height="1" fill="#fff"/><rect x="16" y="3" width="1" height="1" fill="#000"/><rect x="2" y="4" width="1" height="1" fill="#808080"/><rect x="3" y="4" width="1" height="1" fill="#c8c8c8"/><rect x="4" y="4" width="1" height="1" fill="#ffff00"/><rect x="5" y="4" width="1" height="1" fill="#c8c8c8"/><rect x="6" y="4" width="1" height="1" fill="#ffff00"/><rect x="7" y="4" width="1" height="1" fill="#c8c8c8"/><rect x="8" y="4" width="1" height="1" fill="#ffff00"/><rect x="9" y="4" width="1" height="1" fill="#c8c8c8"/><rect x="10" y="4" width="1" height="1" fill="#ffff00"/><rect x="11" y="4" width="1" height="1" fill="#c8c8c8"/><rect x="12" y="4" width="1" height="1" fill="#ffff00"/><rect x="13" y="4" width="1" height="1" fill="#c8c8c8"/><rect x="14" y="4" width="1" height="1" fill="#ffff00"/><rect x="15" y="4" width="1" height="1" fill="#808080"/><rect x="16" y="4" width="1" height="1" fill="#000"/><rect x="1" y="5" width="13" height="1" fill="#808080"/><rect x="14" y="5" width="1" height="1" fill="#c8c8c8"/><rect x="15" y="5" width="1" height="1" fill="#808080"/><rect x="16" y="5" width="1" height="1" fill="#000"/><rect x="0" y="6" width="1" height="1" fill="#808080"/><rect x="1" y="6" width="2" height="1" fill="#fff"/><rect x="3" y="6" width="1" height="1" fill="#c8c8c8"/><rect x="4" y="6" width="1" height="1" fill="#ffff00"/><rect x="5" y="6" width="1" height="1" fill="#c8c8c8"/><rect x="6" y="6" width="1" height="1" fill="#ffff00"/><rect x="7" y="6" width="1" height="1" fill="#c8c8c8"/><rect x="8" y="6" width="1" height="1" fill="#ffff00"/><rect x="9" y="6" width="1" height="1" fill="#c8c8c8"/><rect x="10" y="6" width="1" height="1" fill="#ffff00"/><rect x="11" y="6" width="1" height="1" fill="#c8c8c8"/><rect x="12" y="6" width="1" height="1" fill="#ffff00"/><rect x="13" y="6" width="1" height="1" fill="#000"/><rect x="14" y="6" width="1" height="1" fill="#ffff00"/><rect x="15" y="6" width="1" height="1" fill="#808080"/><rect x="16" y="6" width="1" height="1" fill="#000"/><rect x="1" y="7" width="1" height="1" fill="#808080"/><rect x="2" y="7" width="1" height="1" fill="#fff"/><rect x="3" y="7" width="1" height="1" fill="#ffff00"/><rect x="4" y="7" width="1" height="1" fill="#c8c8c8"/><rect x="5" y="7" width="1" height="1" fill="#ffff00"/><rect x="6" y="7" width="1" height="1" fill="#c8c8c8"/><rect x="7" y="7" width="1" height="1" fill="#ffff00"/><rect x="8" y="7" width="1" height="1" fill="#c8c8c8"/><rect x="9" y="7" width="1" height="1" fill="#ffff00"/><rect x="10" y="7" width="1" height="1" fill="#c8c8c8"/><rect x="11" y="7" width="1" height="1" fill="#ffff00"/><rect x="12" y="7" width="1" height="1" fill="#c8c8c8"/><rect x="13" y="7" width="1" height="1" fill="#ffff00"/><rect x="14" y="7" width="1" height="1" fill="#000"/><rect x="15" y="7" width="1" height="1" fill="#808080"/><rect x="16" y="7" width="1" height="1" fill="#000"/><rect x="2" y="8" width="1" height="1" fill="#808080"/><rect x="3" y="8" width="1" height="1" fill="#fff"/><rect x="4" y="8" width="1" height="1" fill="#ffff00"/><rect x="5" y="8" width="1" height="1" fill="#c8c8c8"/><rect x="6" y="8" width="1" height="1" fill="#ffff00"/><rect x="7" y="8" width="1" height="1" fill="#c8c8c8"/><rect x="8" y="8" width="1" height="1" fill="#ffff00"/><rect x="9" y="8" width="1" height="1" fill="#c8c8c8"/><rect x="10" y="8" width="1" height="1" fill="#ffff00"/><rect x="11" y="8" width="1" height="1" fill="#c8c8c8"/><rect x="12" y="8" width="1" height="1" fill="#ffff00"/><rect x="13" y="8" width="1" height="1" fill="#c8c8c8"/><rect x="14" y="8" width="1" height="1" fill="#000"/><rect x="15" y="8" width="1" height="1" fill="#808080"/><rect x="16" y="8" width="1" height="1" fill="#000"/><rect x="2" y="9" width="1" height="1" fill="#808080"/><rect x="3" y="9" width="1" height="1" fill="#fff"/><rect x="4" y="9" width="1" height="1" fill="#c8c8c8"/><rect x="5" y="9" width="1" height="1" fill="#ffff00"/><rect x="6" y="9" width="1" height="1" fill="#c8c8c8"/><rect x="7" y="9" width="1" height="1" fill="#ffff00"/><rect x="8" y="9" width="1" height="1" fill="#c8c8c8"/><rect x="9" y="9" width="1" height="1" fill="#ffff00"/><rect x="10" y="9" width="1" height="1" fill="#c8c8c8"/><rect x="11" y="9" width="1" height="1" fill="#ffff00"/><rect x="12" y="9" width="1" height="1" fill="#c8c8c8"/><rect x="13" y="9" width="1" height="1" fill="#ffff00"/><rect x="14" y="9" width="1" height="1" fill="#c8c8c8"/><rect x="15" y="9" width="2" height="1" fill="#000"/><rect x="3" y="10" width="1" height="1" fill="#808080"/><rect x="4" y="10" width="1" height="1" fill="#ffff00"/><rect x="5" y="10" width="1" height="1" fill="#c8c8c8"/><rect x="6" y="10" width="1" height="1" fill="#ffff00"/><rect x="7" y="10" width="1" height="1" fill="#c8c8c8"/><rect x="8" y="10" width="1" height="1" fill="#ffff00"/><rect x="9" y="10" width="1" height="1" fill="#c8c8c8"/><rect x="10" y="10" width="1" height="1" fill="#ffff00"/><rect x="11" y="10" width="1" height="1" fill="#c8c8c8"/><rect x="12" y="10" width="1" height="1" fill="#ffff00"/><rect x="13" y="10" width="1" height="1" fill="#c8c8c8"/><rect x="14" y="10" width="1" height="1" fill="#ffff00"/><rect x="15" y="10" width="1" height="1" fill="#808080"/><rect x="16" y="10" width="1" height="1" fill="#000"/><rect x="3" y="11" width="13" height="1" fill="#808080"/><rect x="16" y="11" width="1" height="1" fill="#000"/><rect x="4" y="12" width="13" height="1" fill="#000"/></svg>
<div class="a" style="left:26px;top:207px;width:9px;height:9px;border:1px solid #808080;background:#fff"></div>
<div class="a" style="left:28px;top:211px;width:5px;height:1px;background:#000"></div>
<div class="dh" style="left:36px;top:211px;width:4px"></div>
<div class="t" style="left:62px;top:206px;font-size:12px">P2</div>
<svg class="a" style="left:62px;top:223px" width="12" height="14" viewBox="0 0 12 14" shape-rendering="crispEdges"><rect x="0" y="0" width="9" height="1" fill="#000"/><rect x="0" y="1" width="1" height="1" fill="#000"/><rect x="1" y="1" width="7" height="1" fill="#fff"/><rect x="8" y="1" width="2" height="1" fill="#000"/><rect x="0" y="2" width="1" height="1" fill="#000"/><rect x="1" y="2" width="7" height="1" fill="#fff"/><rect x="8" y="2" width="1" height="1" fill="#000"/><rect x="9" y="2" width="1" height="1" fill="#fff"/><rect x="10" y="2" width="1" height="1" fill="#000"/><rect x="0" y="3" width="1" height="1" fill="#000"/><rect x="1" y="3" width="7" height="1" fill="#fff"/><rect x="8" y="3" width="4" height="1" fill="#000"/><rect x="0" y="4" width="1" height="1" fill="#000"/><rect x="1" y="4" width="2" height="1" fill="#fff"/><rect x="3" y="4" width="4" height="1" fill="#0000ff"/><rect x="7" y="4" width="4" height="1" fill="#fff"/><rect x="11" y="4" width="1" height="1" fill="#000"/><rect x="0" y="5" width="1" height="1" fill="#000"/><rect x="1" y="5" width="10" height="1" fill="#fff"/><rect x="11" y="5" width="1" height="1" fill="#000"/><rect x="0" y="6" width="1" height="1" fill="#000"/><rect x="1" y="6" width="2" height="1" fill="#fff"/><rect x="3" y="6" width="6" height="1" fill="#0000ff"/><rect x="9" y="6" width="2" height="1" fill="#fff"/><rect x="11" y="6" width="1" height="1" fill="#000"/><rect x="0" y="7" width="1" height="1" fill="#000"/><rect x="1" y="7" width="10" height="1" fill="#fff"/><rect x="11" y="7" width="1" height="1" fill="#000"/><rect x="0" y="8" width="1" height="1" fill="#000"/><rect x="1" y="8" width="2" height="1" fill="#fff"/><rect x="3" y="8" width="6" height="1" fill="#0000ff"/><rect x="9" y="8" width="2" height="1" fill="#fff"/><rect x="11" y="8" width="1" height="1" fill="#000"/><rect x="0" y="9" width="1" height="1" fill="#000"/><rect x="1" y="9" width="10" height="1" fill="#fff"/><rect x="11" y="9" width="1" height="1" fill="#000"/><rect x="0" y="10" width="1" height="1" fill="#000"/><rect x="1" y="10" width="2" height="1" fill="#fff"/><rect x="3" y="10" width="6" height="1" fill="#0000ff"/><rect x="9" y="10" width="2" height="1" fill="#fff"/><rect x="11" y="10" width="1" height="1" fill="#000"/><rect x="0" y="11" width="1" height="1" fill="#000"/><rect x="1" y="11" width="10" height="1" fill="#fff"/><rect x="11" y="11" width="1" height="1" fill="#000"/><rect x="0" y="12" width="1" height="1" fill="#000"/><rect x="1" y="12" width="10" height="1" fill="#fff"/><rect x="11" y="12" width="1" height="1" fill="#000"/><rect x="0" y="13" width="12" height="1" fill="#000"/></svg>
<div class="dh" style="left:50px;top:231px;width:10px"></div>
<div class="t" style="left:81px;top:224px;font-size:12px">組合<span style="letter-spacing:-2.5px">せ</span>形状<span style="letter-spacing:-3.3px">デ</span><span style="letter-spacing:-3.3px">ー</span><span style="letter-spacing:-3.3px">タ</span></div>
<svg class="a" style="left:62px;top:241px" width="12" height="14" viewBox="0 0 12 14" shape-rendering="crispEdges"><rect x="0" y="0" width="9" height="1" fill="#000"/><rect x="0" y="1" width="1" height="1" fill="#000"/><rect x="1" y="1" width="7" height="1" fill="#fff"/><rect x="8" y="1" width="2" height="1" fill="#000"/><rect x="0" y="2" width="1" height="1" fill="#000"/><rect x="1" y="2" width="7" height="1" fill="#fff"/><rect x="8" y="2" width="1" height="1" fill="#000"/><rect x="9" y="2" width="1" height="1" fill="#fff"/><rect x="10" y="2" width="1" height="1" fill="#000"/><rect x="0" y="3" width="1" height="1" fill="#000"/><rect x="1" y="3" width="7" height="1" fill="#fff"/><rect x="8" y="3" width="4" height="1" fill="#000"/><rect x="0" y="4" width="1" height="1" fill="#000"/><rect x="1" y="4" width="2" height="1" fill="#fff"/><rect x="3" y="4" width="4" height="1" fill="#0000ff"/><rect x="7" y="4" width="4" height="1" fill="#fff"/><rect x="11" y="4" width="1" height="1" fill="#000"/><rect x="0" y="5" width="1" height="1" fill="#000"/><rect x="1" y="5" width="10" height="1" fill="#fff"/><rect x="11" y="5" width="1" height="1" fill="#000"/><rect x="0" y="6" width="1" height="1" fill="#000"/><rect x="1" y="6" width="2" height="1" fill="#fff"/><rect x="3" y="6" width="6" height="1" fill="#0000ff"/><rect x="9" y="6" width="2" height="1" fill="#fff"/><rect x="11" y="6" width="1" height="1" fill="#000"/><rect x="0" y="7" width="1" height="1" fill="#000"/><rect x="1" y="7" width="10" height="1" fill="#fff"/><rect x="11" y="7" width="1" height="1" fill="#000"/><rect x="0" y="8" width="1" height="1" fill="#000"/><rect x="1" y="8" width="2" height="1" fill="#fff"/><rect x="3" y="8" width="6" height="1" fill="#0000ff"/><rect x="9" y="8" width="2" height="1" fill="#fff"/><rect x="11" y="8" width="1" height="1" fill="#000"/><rect x="0" y="9" width="1" height="1" fill="#000"/><rect x="1" y="9" width="10" height="1" fill="#fff"/><rect x="11" y="9" width="1" height="1" fill="#000"/><rect x="0" y="10" width="1" height="1" fill="#000"/><rect x="1" y="10" width="2" height="1" fill="#fff"/><rect x="3" y="10" width="6" height="1" fill="#0000ff"/><rect x="9" y="10" width="2" height="1" fill="#fff"/><rect x="11" y="10" width="1" height="1" fill="#000"/><rect x="0" y="11" width="1" height="1" fill="#000"/><rect x="1" y="11" width="10" height="1" fill="#fff"/><rect x="11" y="11" width="1" height="1" fill="#000"/><rect x="0" y="12" width="1" height="1" fill="#000"/><rect x="1" y="12" width="10" height="1" fill="#fff"/><rect x="11" y="12" width="1" height="1" fill="#000"/><rect x="0" y="13" width="12" height="1" fill="#000"/></svg>
<div class="dh" style="left:50px;top:249px;width:10px"></div>
<div class="t" style="left:81px;top:242px;font-size:12px">計算条件</div>
<svg class="a" style="left:21px;top:259px" width="17" height="13" viewBox="0 0 17 13" shape-rendering="crispEdges"><rect x="4" y="0" width="5" height="1" fill="#808080"/><rect x="3" y="1" width="1" height="1" fill="#808080"/><rect x="4" y="1" width="5" height="1" fill="#fff"/><rect x="9" y="1" width="1" height="1" fill="#808080"/><rect x="2" y="2" width="1" height="1" fill="#808080"/><rect x="3" y="2" width="1" height="1" fill="#fff"/><rect x="4" y="2" width="1" height="1" fill="#ffff00"/><rect x="5" y="2" width="1" height="1" fill="#c8c8c8"/><rect x="6" y="2" width="1" height="1" fill="#ffff00"/><rect x="7" y="2" width="1" height="1" fill="#c8c8c8"/><rect x="8" y="2" width="1" height="1" fill="#ffff00"/><rect x="9" y="2" width="1" height="1" fill="#fff"/><rect x="10" y="2" width="6" height="1" fill="#808080"/><rect x="2" y="3" width="1" height="1" fill="#808080"/><rect x="3" y="3" width="1" height="1" fill="#ffff00"/><rect x="4" y="3" width="1" height="1" fill="#c8c8c8"/><rect x="5" y="3" width="1" height="1" fill="#ffff00"/><rect x="6" y="3" width="1" height="1" fill="#c8c8c8"/><rect x="7" y="3" width="1" height="1" fill="#ffff00"/><rect x="8" y="3" width="1" height="1" fill="#c8c8c8"/><rect x="9" y="3" width="1" height="1" fill="#ffff00"/><rect x="10" y="3" width="1" height="1" fill="#c8c8c8"/><rect x="11" y="3" width="1" height="1" fill="#ffff00"/><rect x="12" y="3" width="1" height="1" fill="#c8c8c8"/><rect x="13" y="3" width="1" height="1" fill="#ffff00"/><rect x="14" y="3" width="1" height="1" fill="#c8c8c8"/><rect x="15" y="3" width="1" height="1" fill="#fff"/><rect x="16" y="3" width="1" height="1" fill="#000"/><rect x="2" y="4" width="1" height="1" fill="#808080"/><rect x="3" y="4" width="1" height="1" fill="#c8c8c8"/><rect x="4" y="4" width="1" height="1" fill="#ffff00"/><rect x="5" y="4" width="1" height="1" fill="#c8c8c8"/><rect x="6" y="4" width="1" height="1" fill="#ffff00"/><rect x="7" y="4" width="1" height="1" fill="#c8c8c8"/><rect x="8" y="4" width="1" height="1" fill="#ffff00"/><rect x="9" y="4" width="1" height="1" fill="#c8c8c8"/><rect x="10" y="4" width="1" height="1" fill="#ffff00"/><rect x="11" y="4" width="1" height="1" fill="#c8c8c8"/><rect x="12" y="4" width="1" height="1" fill="#ffff00"/><rect x="13" y="4" width="1" height="1" fill="#c8c8c8"/><rect x="14" y="4" width="1" height="1" fill="#ffff00"/><rect x="15" y="4" width="1" height="1" fill="#808080"/><rect x="16" y="4" width="1" height="1" fill="#000"/><rect x="1" y="5" width="13" height="1" fill="#808080"/><rect x="14" y="5" width="1" height="1" fill="#c8c8c8"/><rect x="15" y="5" width="1" height="1" fill="#808080"/><rect x="16" y="5" width="1" height="1" fill="#000"/><rect x="0" y="6" width="1" height="1" fill="#808080"/><rect x="1" y="6" width="2" height="1" fill="#fff"/><rect x="3" y="6" width="1" height="1" fill="#c8c8c8"/><rect x="4" y="6" width="1" height="1" fill="#ffff00"/><rect x="5" y="6" width="1" height="1" fill="#c8c8c8"/><rect x="6" y="6" width="1" height="1" fill="#ffff00"/><rect x="7" y="6" width="1" height="1" fill="#c8c8c8"/><rect x="8" y="6" width="1" height="1" fill="#ffff00"/><rect x="9" y="6" width="1" height="1" fill="#c8c8c8"/><rect x="10" y="6" width="1" height="1" fill="#ffff00"/><rect x="11" y="6" width="1" height="1" fill="#c8c8c8"/><rect x="12" y="6" width="1" height="1" fill="#ffff00"/><rect x="13" y="6" width="1" height="1" fill="#000"/><rect x="14" y="6" width="1" height="1" fill="#ffff00"/><rect x="15" y="6" width="1" height="1" fill="#808080"/><rect x="16" y="6" width="1" height="1" fill="#000"/><rect x="1" y="7" width="1" height="1" fill="#808080"/><rect x="2" y="7" width="1" height="1" fill="#fff"/><rect x="3" y="7" width="1" height="1" fill="#ffff00"/><rect x="4" y="7" width="1" height="1" fill="#c8c8c8"/><rect x="5" y="7" width="1" height="1" fill="#ffff00"/><rect x="6" y="7" width="1" height="1" fill="#c8c8c8"/><rect x="7" y="7" width="1" height="1" fill="#ffff00"/><rect x="8" y="7" width="1" height="1" fill="#c8c8c8"/><rect x="9" y="7" width="1" height="1" fill="#ffff00"/><rect x="10" y="7" width="1" height="1" fill="#c8c8c8"/><rect x="11" y="7" width="1" height="1" fill="#ffff00"/><rect x="12" y="7" width="1" height="1" fill="#c8c8c8"/><rect x="13" y="7" width="1" height="1" fill="#ffff00"/><rect x="14" y="7" width="1" height="1" fill="#000"/><rect x="15" y="7" width="1" height="1" fill="#808080"/><rect x="16" y="7" width="1" height="1" fill="#000"/><rect x="2" y="8" width="1" height="1" fill="#808080"/><rect x="3" y="8" width="1" height="1" fill="#fff"/><rect x="4" y="8" width="1" height="1" fill="#ffff00"/><rect x="5" y="8" width="1" height="1" fill="#c8c8c8"/><rect x="6" y="8" width="1" height="1" fill="#ffff00"/><rect x="7" y="8" width="1" height="1" fill="#c8c8c8"/><rect x="8" y="8" width="1" height="1" fill="#ffff00"/><rect x="9" y="8" width="1" height="1" fill="#c8c8c8"/><rect x="10" y="8" width="1" height="1" fill="#ffff00"/><rect x="11" y="8" width="1" height="1" fill="#c8c8c8"/><rect x="12" y="8" width="1" height="1" fill="#ffff00"/><rect x="13" y="8" width="1" height="1" fill="#c8c8c8"/><rect x="14" y="8" width="1" height="1" fill="#000"/><rect x="15" y="8" width="1" height="1" fill="#808080"/><rect x="16" y="8" width="1" height="1" fill="#000"/><rect x="2" y="9" width="1" height="1" fill="#808080"/><rect x="3" y="9" width="1" height="1" fill="#fff"/><rect x="4" y="9" width="1" height="1" fill="#c8c8c8"/><rect x="5" y="9" width="1" height="1" fill="#ffff00"/><rect x="6" y="9" width="1" height="1" fill="#c8c8c8"/><rect x="7" y="9" width="1" height="1" fill="#ffff00"/><rect x="8" y="9" width="1" height="1" fill="#c8c8c8"/><rect x="9" y="9" width="1" height="1" fill="#ffff00"/><rect x="10" y="9" width="1" height="1" fill="#c8c8c8"/><rect x="11" y="9" width="1" height="1" fill="#ffff00"/><rect x="12" y="9" width="1" height="1" fill="#c8c8c8"/><rect x="13" y="9" width="1" height="1" fill="#ffff00"/><rect x="14" y="9" width="1" height="1" fill="#c8c8c8"/><rect x="15" y="9" width="2" height="1" fill="#000"/><rect x="3" y="10" width="1" height="1" fill="#808080"/><rect x="4" y="10" width="1" height="1" fill="#ffff00"/><rect x="5" y="10" width="1" height="1" fill="#c8c8c8"/><rect x="6" y="10" width="1" height="1" fill="#ffff00"/><rect x="7" y="10" width="1" height="1" fill="#c8c8c8"/><rect x="8" y="10" width="1" height="1" fill="#ffff00"/><rect x="9" y="10" width="1" height="1" fill="#c8c8c8"/><rect x="10" y="10" width="1" height="1" fill="#ffff00"/><rect x="11" y="10" width="1" height="1" fill="#c8c8c8"/><rect x="12" y="10" width="1" height="1" fill="#ffff00"/><rect x="13" y="10" width="1" height="1" fill="#c8c8c8"/><rect x="14" y="10" width="1" height="1" fill="#ffff00"/><rect x="15" y="10" width="1" height="1" fill="#808080"/><rect x="16" y="10" width="1" height="1" fill="#000"/><rect x="3" y="11" width="13" height="1" fill="#808080"/><rect x="16" y="11" width="1" height="1" fill="#000"/><rect x="4" y="12" width="13" height="1" fill="#000"/></svg>
<div class="a" style="left:7px;top:261px;width:9px;height:9px;border:1px solid #808080;background:#fff"></div>
<div class="a" style="left:9px;top:265px;width:5px;height:1px;background:#000"></div>
<div class="dh" style="left:17px;top:265px;width:4px"></div>
<div class="t" style="left:43px;top:260px;font-size:12px">計算結果</div>
<svg class="a" style="left:43px;top:277px" width="12" height="14" viewBox="0 0 12 14" shape-rendering="crispEdges"><rect x="0" y="0" width="9" height="1" fill="#000"/><rect x="0" y="1" width="1" height="1" fill="#000"/><rect x="1" y="1" width="7" height="1" fill="#fff"/><rect x="8" y="1" width="2" height="1" fill="#000"/><rect x="0" y="2" width="1" height="1" fill="#000"/><rect x="1" y="2" width="7" height="1" fill="#fff"/><rect x="8" y="2" width="1" height="1" fill="#000"/><rect x="9" y="2" width="1" height="1" fill="#fff"/><rect x="10" y="2" width="1" height="1" fill="#000"/><rect x="0" y="3" width="1" height="1" fill="#000"/><rect x="1" y="3" width="7" height="1" fill="#fff"/><rect x="8" y="3" width="4" height="1" fill="#000"/><rect x="0" y="4" width="1" height="1" fill="#000"/><rect x="1" y="4" width="2" height="1" fill="#fff"/><rect x="3" y="4" width="4" height="1" fill="#0000ff"/><rect x="7" y="4" width="4" height="1" fill="#fff"/><rect x="11" y="4" width="1" height="1" fill="#000"/><rect x="0" y="5" width="1" height="1" fill="#000"/><rect x="1" y="5" width="10" height="1" fill="#fff"/><rect x="11" y="5" width="1" height="1" fill="#000"/><rect x="0" y="6" width="1" height="1" fill="#000"/><rect x="1" y="6" width="2" height="1" fill="#fff"/><rect x="3" y="6" width="6" height="1" fill="#0000ff"/><rect x="9" y="6" width="2" height="1" fill="#fff"/><rect x="11" y="6" width="1" height="1" fill="#000"/><rect x="0" y="7" width="1" height="1" fill="#000"/><rect x="1" y="7" width="10" height="1" fill="#fff"/><rect x="11" y="7" width="1" height="1" fill="#000"/><rect x="0" y="8" width="1" height="1" fill="#000"/><rect x="1" y="8" width="2" height="1" fill="#fff"/><rect x="3" y="8" width="6" height="1" fill="#0000ff"/><rect x="9" y="8" width="2" height="1" fill="#fff"/><rect x="11" y="8" width="1" height="1" fill="#000"/><rect x="0" y="9" width="1" height="1" fill="#000"/><rect x="1" y="9" width="10" height="1" fill="#fff"/><rect x="11" y="9" width="1" height="1" fill="#000"/><rect x="0" y="10" width="1" height="1" fill="#000"/><rect x="1" y="10" width="2" height="1" fill="#fff"/><rect x="3" y="10" width="6" height="1" fill="#0000ff"/><rect x="9" y="10" width="2" height="1" fill="#fff"/><rect x="11" y="10" width="1" height="1" fill="#000"/><rect x="0" y="11" width="1" height="1" fill="#000"/><rect x="1" y="11" width="10" height="1" fill="#fff"/><rect x="11" y="11" width="1" height="1" fill="#000"/><rect x="0" y="12" width="1" height="1" fill="#000"/><rect x="1" y="12" width="10" height="1" fill="#fff"/><rect x="11" y="12" width="1" height="1" fill="#000"/><rect x="0" y="13" width="12" height="1" fill="#000"/></svg>
<div class="dh" style="left:31px;top:285px;width:10px"></div>
<div class="t" style="left:62px;top:278px;font-size:12px">P1</div>
<svg class="a" style="left:43px;top:295px" width="12" height="14" viewBox="0 0 12 14" shape-rendering="crispEdges"><rect x="0" y="0" width="9" height="1" fill="#000"/><rect x="0" y="1" width="1" height="1" fill="#000"/><rect x="1" y="1" width="7" height="1" fill="#fff"/><rect x="8" y="1" width="2" height="1" fill="#000"/><rect x="0" y="2" width="1" height="1" fill="#000"/><rect x="1" y="2" width="7" height="1" fill="#fff"/><rect x="8" y="2" width="1" height="1" fill="#000"/><rect x="9" y="2" width="1" height="1" fill="#fff"/><rect x="10" y="2" width="1" height="1" fill="#000"/><rect x="0" y="3" width="1" height="1" fill="#000"/><rect x="1" y="3" width="7" height="1" fill="#fff"/><rect x="8" y="3" width="4" height="1" fill="#000"/><rect x="0" y="4" width="1" height="1" fill="#000"/><rect x="1" y="4" width="2" height="1" fill="#fff"/><rect x="3" y="4" width="4" height="1" fill="#0000ff"/><rect x="7" y="4" width="4" height="1" fill="#fff"/><rect x="11" y="4" width="1" height="1" fill="#000"/><rect x="0" y="5" width="1" height="1" fill="#000"/><rect x="1" y="5" width="10" height="1" fill="#fff"/><rect x="11" y="5" width="1" height="1" fill="#000"/><rect x="0" y="6" width="1" height="1" fill="#000"/><rect x="1" y="6" width="2" height="1" fill="#fff"/><rect x="3" y="6" width="6" height="1" fill="#0000ff"/><rect x="9" y="6" width="2" height="1" fill="#fff"/><rect x="11" y="6" width="1" height="1" fill="#000"/><rect x="0" y="7" width="1" height="1" fill="#000"/><rect x="1" y="7" width="10" height="1" fill="#fff"/><rect x="11" y="7" width="1" height="1" fill="#000"/><rect x="0" y="8" width="1" height="1" fill="#000"/><rect x="1" y="8" width="2" height="1" fill="#fff"/><rect x="3" y="8" width="6" height="1" fill="#0000ff"/><rect x="9" y="8" width="2" height="1" fill="#fff"/><rect x="11" y="8" width="1" height="1" fill="#000"/><rect x="0" y="9" width="1" height="1" fill="#000"/><rect x="1" y="9" width="10" height="1" fill="#fff"/><rect x="11" y="9" width="1" height="1" fill="#000"/><rect x="0" y="10" width="1" height="1" fill="#000"/><rect x="1" y="10" width="2" height="1" fill="#fff"/><rect x="3" y="10" width="6" height="1" fill="#0000ff"/><rect x="9" y="10" width="2" height="1" fill="#fff"/><rect x="11" y="10" width="1" height="1" fill="#000"/><rect x="0" y="11" width="1" height="1" fill="#000"/><rect x="1" y="11" width="10" height="1" fill="#fff"/><rect x="11" y="11" width="1" height="1" fill="#000"/><rect x="0" y="12" width="1" height="1" fill="#000"/><rect x="1" y="12" width="10" height="1" fill="#fff"/><rect x="11" y="12" width="1" height="1" fill="#000"/><rect x="0" y="13" width="12" height="1" fill="#000"/></svg>
<div class="dh" style="left:31px;top:303px;width:10px"></div>
<div class="t" style="left:62px;top:296px;font-size:12px">P2</div>
<svg class="a" style="left:22px;top:314px" width="17" height="12" viewBox="0 0 17 12" shape-rendering="crispEdges"><rect x="5" y="0" width="10" height="1" fill="#000"/><rect x="4" y="1" width="1" height="1" fill="#000"/><rect x="5" y="1" width="8" height="1" fill="#fff"/><rect x="13" y="1" width="1" height="1" fill="#000"/><rect x="4" y="2" width="1" height="1" fill="#000"/><rect x="5" y="2" width="1" height="1" fill="#fff"/><rect x="6" y="2" width="5" height="1" fill="#000"/><rect x="11" y="2" width="1" height="1" fill="#fff"/><rect x="12" y="2" width="1" height="1" fill="#000"/><rect x="3" y="3" width="1" height="1" fill="#000"/><rect x="4" y="3" width="8" height="1" fill="#fff"/><rect x="12" y="3" width="1" height="1" fill="#000"/><rect x="3" y="4" width="1" height="1" fill="#000"/><rect x="4" y="4" width="1" height="1" fill="#fff"/><rect x="5" y="4" width="5" height="1" fill="#000"/><rect x="10" y="4" width="1" height="1" fill="#fff"/><rect x="11" y="4" width="3" height="1" fill="#000"/><rect x="1" y="5" width="12" height="1" fill="#000"/><rect x="13" y="5" width="1" height="1" fill="#fff"/><rect x="14" y="5" width="2" height="1" fill="#000"/><rect x="0" y="6" width="1" height="1" fill="#000"/><rect x="1" y="6" width="11" height="1" fill="#fff"/><rect x="12" y="6" width="1" height="1" fill="#000"/><rect x="13" y="6" width="2" height="1" fill="#fff"/><rect x="15" y="6" width="1" height="1" fill="#000"/><rect x="0" y="7" width="14" height="1" fill="#000"/><rect x="14" y="7" width="1" height="1" fill="#fff"/><rect x="15" y="7" width="1" height="1" fill="#000"/><rect x="0" y="8" width="1" height="1" fill="#000"/><rect x="1" y="8" width="6" height="1" fill="#c0c0c0"/><rect x="7" y="8" width="2" height="1" fill="#ffff00"/><rect x="9" y="8" width="4" height="1" fill="#c0c0c0"/><rect x="13" y="8" width="1" height="1" fill="#000"/><rect x="14" y="8" width="1" height="1" fill="#fff"/><rect x="15" y="8" width="1" height="1" fill="#000"/><rect x="0" y="9" width="15" height="1" fill="#000"/><rect x="1" y="10" width="1" height="1" fill="#000"/><rect x="2" y="10" width="11" height="1" fill="#fff"/><rect x="13" y="10" width="2" height="1" fill="#000"/><rect x="2" y="11" width="12" height="1" fill="#000"/></svg>
<div class="dh" style="left:12px;top:322px;width:10px"></div>
<div class="t" style="left:43px;top:314px;font-size:12px">印刷</div>
<div class="a" style="left:208px;top:75px;width:747px;height:618px;border-top:1px solid #a0a0a0;border-left:1px solid #a0a0a0;border-bottom:1px solid #fff"></div>
<div class="a" style="left:209px;top:76px;width:746px;height:616px;border-top:1px solid #696969;border-left:1px solid #696969"></div>
<div class="t" style="left:221px;top:89px;font-size:12.5px;letter-spacing:1.0px">◆基本形状データ登録</div>
<div class="btn" style="left:221px;top:111px;width:88px;height:23px"></div>
<div class="t" style="left:221px;top:116px;width:88px;text-align:center;font-size:12.5px;letter-spacing:1.5px"></div>
<div class="t" style="left:226px;top:115px;font-size:12.5px;letter-spacing:1.2px">形状追加</div>
<div class="a" style="left:289px;top:117px;width:0;height:0;border-left:6px solid transparent;border-right:6px solid transparent;border-top:10px solid #000"></div>
<div class="btn" style="left:221px;top:140px;width:88px;height:23px"></div>
<div class="t" style="left:221px;top:145px;width:88px;text-align:center;font-size:12.5px;letter-spacing:1.5px">編集</div>
<div class="btn" style="left:221px;top:170px;width:88px;height:23px"></div>
<div class="t" style="left:221px;top:175px;width:88px;text-align:center;font-size:12.5px;letter-spacing:1.5px">コピー</div>
<div class="btn" style="left:221px;top:199px;width:88px;height:23px"></div>
<div class="t" style="left:221px;top:204px;width:88px;text-align:center;font-size:12.5px;letter-spacing:1.5px">削除</div>
<div class="a" style="left:317px;top:108px;width:177px;height:236px;background:#fff;border-top:1px solid #a0a0a0;border-left:1px solid #a0a0a0;border-right:1px solid #fff;border-bottom:1px solid #fff"></div>
<div class="a" style="left:318px;top:109px;width:175px;height:234px;border-top:1px solid #696969;border-left:1px solid #696969;border-right:1px solid #e3e3e3;border-bottom:1px solid #e3e3e3"></div>
<div class="a" style="left:319px;top:123px;width:174px;height:13px;background:#0078d7;outline:1px dotted #ff9a30;outline-offset:-1px"></div>
<div class="t m" style="left:320px;top:110px;font-size:13px;line-height:13px">矩形(1)<br><span style="color:#fff">外円</span><br>内円</div>
<div class="a" style="left:499px;top:92px;width:63px;height:14px;border-top:1px solid #a0a0a0;border-left:1px solid #a0a0a0;border-right:1px solid #fff"></div>
<div class="a" style="left:567px;top:92px;width:63px;height:14px;border-top:1px solid #a0a0a0;border-left:1px solid #a0a0a0;border-right:1px solid #fff"></div>
<div class="a" style="left:499px;top:108px;width:289px;height:236px;background:#fff;border:1px solid #696969"></div>
<div class="t" style="left:656px;top:212px;font-size:12.5px;transform:scaleX(0.81);transform-origin:0 0;color:#000">2000</div>
<div class="t m" style="left:685px;top:212px;font-size:12.5px;transform:scaleX(0.8);transform-origin:0 0">mm</div>
<svg class="a" style="left:500px;top:109px" width="287" height="234" viewBox="500 109 287 234" shape-rendering="crispEdges"><defs><g id="dt"><rect x="2" y="0" width="3" height="1" fill="#000"/><rect x="1" y="1" width="5" height="3" fill="#000"/><rect x="0" y="2" width="1" height="1" fill="#000"/><rect x="2" y="1" width="3" height="3" fill="#000080"/><rect x="1" y="2" width="1" height="1" fill="#000080"/><rect x="2" y="4" width="3" height="1" fill="#000"/></g></defs><circle cx="642.5" cy="225.5" r="69" fill="none" stroke="#000" stroke-width="1"/><circle cx="642.5" cy="225.5" r="67" fill="none" stroke="#000" stroke-width="1"/><use href="#dt" x="700" y="223"/><use href="#dt" x="700" y="228"/><use href="#dt" x="700" y="234"/><use href="#dt" x="698" y="239"/><use href="#dt" x="697" y="244"/><use href="#dt" x="695" y="249"/><use href="#dt" x="692" y="254"/><use href="#dt" x="689" y="258"/><use href="#dt" x="686" y="262"/><use href="#dt" x="683" y="266"/><use href="#dt" x="679" y="270"/><use href="#dt" x="674" y="273"/><use href="#dt" x="670" y="276"/><use href="#dt" x="665" y="278"/><use href="#dt" x="660" y="280"/><use href="#dt" x="655" y="282"/><use href="#dt" x="650" y="283"/><use href="#dt" x="645" y="284"/><use href="#dt" x="640" y="284"/><use href="#dt" x="634" y="284"/><use href="#dt" x="629" y="283"/><use href="#dt" x="624" y="282"/><use href="#dt" x="619" y="280"/><use href="#dt" x="614" y="278"/><use href="#dt" x="609" y="276"/><use href="#dt" x="605" y="273"/><use href="#dt" x="600" y="270"/><use href="#dt" x="596" y="266"/><use href="#dt" x="593" y="262"/><use href="#dt" x="590" y="258"/><use href="#dt" x="587" y="254"/><use href="#dt" x="584" y="249"/><use href="#dt" x="582" y="244"/><use href="#dt" x="581" y="239"/><use href="#dt" x="579" y="234"/><use href="#dt" x="579" y="228"/><use href="#dt" x="578" y="223"/><use href="#dt" x="579" y="218"/><use href="#dt" x="579" y="212"/><use href="#dt" x="581" y="207"/><use href="#dt" x="582" y="202"/><use href="#dt" x="584" y="197"/><use href="#dt" x="587" y="192"/><use href="#dt" x="590" y="188"/><use href="#dt" x="593" y="184"/><use href="#dt" x="596" y="180"/><use href="#dt" x="600" y="176"/><use href="#dt" x="605" y="173"/><use href="#dt" x="609" y="170"/><use href="#dt" x="614" y="168"/><use href="#dt" x="619" y="166"/><use href="#dt" x="624" y="164"/><use href="#dt" x="629" y="163"/><use href="#dt" x="634" y="162"/><use href="#dt" x="640" y="162"/><use href="#dt" x="645" y="162"/><use href="#dt" x="650" y="163"/><use href="#dt" x="655" y="164"/><use href="#dt" x="660" y="166"/><use href="#dt" x="665" y="168"/><use href="#dt" x="670" y="170"/><use href="#dt" x="674" y="173"/><use href="#dt" x="679" y="176"/><use href="#dt" x="683" y="180"/><use href="#dt" x="686" y="184"/><use href="#dt" x="689" y="188"/><use href="#dt" x="692" y="193"/><use href="#dt" x="695" y="197"/><use href="#dt" x="697" y="202"/><use href="#dt" x="698" y="207"/><use href="#dt" x="700" y="212"/><use href="#dt" x="700" y="218"/><use href="#dt" x="704" y="223"/><use href="#dt" x="704" y="229"/><use href="#dt" x="704" y="234"/><use href="#dt" x="702" y="240"/><use href="#dt" x="701" y="245"/><use href="#dt" x="698" y="250"/><use href="#dt" x="696" y="256"/><use href="#dt" x="693" y="260"/><use href="#dt" x="689" y="265"/><use href="#dt" x="685" y="269"/><use href="#dt" x="681" y="273"/><use href="#dt" x="677" y="276"/><use href="#dt" x="672" y="279"/><use href="#dt" x="667" y="282"/><use href="#dt" x="662" y="284"/><use href="#dt" x="656" y="286"/><use href="#dt" x="651" y="287"/><use href="#dt" x="645" y="288"/><use href="#dt" x="640" y="288"/><use href="#dt" x="634" y="288"/><use href="#dt" x="628" y="287"/><use href="#dt" x="623" y="286"/><use href="#dt" x="617" y="284"/><use href="#dt" x="612" y="282"/><use href="#dt" x="607" y="279"/><use href="#dt" x="602" y="276"/><use href="#dt" x="598" y="273"/><use href="#dt" x="594" y="269"/><use href="#dt" x="590" y="265"/><use href="#dt" x="586" y="260"/><use href="#dt" x="583" y="256"/><use href="#dt" x="581" y="250"/><use href="#dt" x="578" y="245"/><use href="#dt" x="577" y="240"/><use href="#dt" x="575" y="234"/><use href="#dt" x="575" y="229"/><use href="#dt" x="574" y="223"/><use href="#dt" x="575" y="217"/><use href="#dt" x="575" y="212"/><use href="#dt" x="577" y="206"/><use href="#dt" x="578" y="201"/><use href="#dt" x="581" y="196"/><use href="#dt" x="583" y="190"/><use href="#dt" x="586" y="186"/><use href="#dt" x="590" y="181"/><use href="#dt" x="594" y="177"/><use href="#dt" x="598" y="173"/><use href="#dt" x="602" y="170"/><use href="#dt" x="607" y="167"/><use href="#dt" x="612" y="164"/><use href="#dt" x="617" y="162"/><use href="#dt" x="623" y="160"/><use href="#dt" x="628" y="159"/><use href="#dt" x="634" y="158"/><use href="#dt" x="640" y="158"/><use href="#dt" x="645" y="158"/><use href="#dt" x="651" y="159"/><use href="#dt" x="656" y="160"/><use href="#dt" x="662" y="162"/><use href="#dt" x="667" y="164"/><use href="#dt" x="672" y="167"/><use href="#dt" x="677" y="170"/><use href="#dt" x="681" y="173"/><use href="#dt" x="685" y="177"/><use href="#dt" x="689" y="181"/><use href="#dt" x="693" y="186"/><use href="#dt" x="696" y="191"/><use href="#dt" x="698" y="196"/><use href="#dt" x="701" y="201"/><use href="#dt" x="702" y="206"/><use href="#dt" x="704" y="212"/><use href="#dt" x="704" y="217"/><use href="#dt" x="686" y="223"/><use href="#dt" x="685" y="231"/><use href="#dt" x="683" y="239"/><use href="#dt" x="680" y="246"/><use href="#dt" x="675" y="253"/><use href="#dt" x="669" y="259"/><use href="#dt" x="663" y="263"/><use href="#dt" x="655" y="267"/><use href="#dt" x="648" y="269"/><use href="#dt" x="640" y="270"/><use href="#dt" x="631" y="269"/><use href="#dt" x="624" y="267"/><use href="#dt" x="616" y="263"/><use href="#dt" x="610" y="259"/><use href="#dt" x="604" y="253"/><use href="#dt" x="599" y="246"/><use href="#dt" x="596" y="239"/><use href="#dt" x="594" y="231"/><use href="#dt" x="593" y="223"/><use href="#dt" x="594" y="215"/><use href="#dt" x="596" y="207"/><use href="#dt" x="599" y="200"/><use href="#dt" x="604" y="193"/><use href="#dt" x="610" y="187"/><use href="#dt" x="616" y="183"/><use href="#dt" x="624" y="179"/><use href="#dt" x="631" y="177"/><use href="#dt" x="640" y="176"/><use href="#dt" x="648" y="177"/><use href="#dt" x="655" y="179"/><use href="#dt" x="663" y="183"/><use href="#dt" x="669" y="187"/><use href="#dt" x="675" y="193"/><use href="#dt" x="680" y="200"/><use href="#dt" x="683" y="207"/><use href="#dt" x="685" y="215"/><path d="M643,226.5 H711 M643,226.5 L653,223 M643,226.5 L653,230 M711.5,220 V232" stroke="#000" stroke-width="1" fill="none"/></svg>
<div class="t" style="left:221px;top:353px;font-size:12.5px;letter-spacing:1.3px">◆鋼材データ</div>
<div class="btn" style="left:317px;top:348px;width:61px;height:23px"></div>
<div class="t" style="left:317px;top:353px;width:61px;text-align:center;font-size:12.5px;letter-spacing:1.5px"></div>
<div class="t" style="left:322px;top:352px;font-size:12.5px;letter-spacing:1.2px">追加</div>
<div class="a" style="left:359px;top:354px;width:0;height:0;border-left:6px solid transparent;border-right:6px solid transparent;border-top:10px solid #000"></div>
<div class="btn" style="left:382px;top:348px;width:60px;height:23px"></div>
<div class="t" style="left:382px;top:353px;width:60px;text-align:center;font-size:12.5px;letter-spacing:1.5px">削除</div>
<div class="a" style="left:221px;top:374px;width:567px;height:237px;border:1px solid #696969"></div>
<div class="a" style="left:222px;top:375px;width:565px;height:235px;border-top:1px solid #fff;border-left:1px solid #fff;border-right:1px solid #a0a0a0;border-bottom:1px solid #a0a0a0"></div>
<div class="a" style="left:223px;top:376px;width:563px;height:233px;border-top:1px solid #a0a0a0;border-left:1px solid #a0a0a0;border-right:1px solid #fff;border-bottom:1px solid #fff"></div>
<div class="a" style="left:224px;top:377px;width:561px;height:231px;border:1px solid #000"></div>
<div class="a" style="left:225px;top:378px;width:33px;height:33px;background:#f0f0f0;border-right:1px solid #202020;border-bottom:1px solid #202020"></div>
<div class="a" style="left:225px;top:378px;width:32px;height:32px;border:1px solid #fff;box-shadow:inset 0 0 0 1px #a0a0a0,inset 0 0 0 2px #fff"></div>
<div class="a" style="left:258px;top:378px;width:179px;height:33px;background:#f0f0f0;border-right:1px solid #202020;border-bottom:1px solid #202020"></div>
<div class="a" style="left:258px;top:378px;width:178px;height:32px;border:1px solid #fff;box-shadow:inset 0 0 0 1px #a0a0a0,inset 0 0 0 2px #fff"></div>
<div class="t" style="left:258px;top:388px;width:179px;text-align:center;font-size:13px">材料</div>
<div class="a" style="left:437px;top:378px;width:57px;height:33px;background:#f0f0f0;border-right:1px solid #202020;border-bottom:1px solid #202020"></div>
<div class="a" style="left:437px;top:378px;width:56px;height:32px;border:1px solid #fff;box-shadow:inset 0 0 0 1px #a0a0a0,inset 0 0 0 2px #fff"></div>
<div class="t" style="left:437px;top:388px;width:57px;text-align:center;font-size:13px">基準辺</div>
<div class="a" style="left:494px;top:378px;width:49px;height:33px;background:#f0f0f0;border-right:1px solid #202020;border-bottom:1px solid #202020"></div>
<div class="a" style="left:494px;top:378px;width:48px;height:32px;border:1px solid #fff;box-shadow:inset 0 0 0 1px #a0a0a0,inset 0 0 0 2px #fff"></div>
<div class="t" style="left:494px;top:388px;width:49px;text-align:center;font-size:13px">本数</div>
<div class="a" style="left:543px;top:378px;width:73px;height:33px;background:#f0f0f0;border-right:1px solid #202020;border-bottom:1px solid #202020"></div>
<div class="a" style="left:543px;top:378px;width:72px;height:32px;border:1px solid #fff;box-shadow:inset 0 0 0 1px #a0a0a0,inset 0 0 0 2px #fff"></div>
<div class="t m" style="left:543px;top:381px;width:73px;text-align:center;font-size:13px;line-height:13px">かぶり<br>[mm]</div>
<div class="a" style="left:616px;top:378px;width:73px;height:33px;background:#f0f0f0;border-right:1px solid #202020;border-bottom:1px solid #202020"></div>
<div class="a" style="left:616px;top:378px;width:72px;height:32px;border:1px solid #fff;box-shadow:inset 0 0 0 1px #a0a0a0,inset 0 0 0 2px #fff"></div>
<div class="t m" style="left:616px;top:381px;width:73px;text-align:center;font-size:13px;line-height:13px"><span style="letter-spacing:1.3px;margin-right:-1.3px">配置開始角</span><br>[度]</div>
<div class="a" style="left:689px;top:378px;width:73px;height:33px;background:#f0f0f0;border-right:1px solid #202020;border-bottom:1px solid #202020"></div>
<div class="a" style="left:689px;top:378px;width:72px;height:32px;border:1px solid #fff;box-shadow:inset 0 0 0 1px #a0a0a0,inset 0 0 0 2px #fff"></div>
<div class="t m" style="left:689px;top:381px;width:73px;text-align:center;font-size:13px;line-height:13px"><span style="letter-spacing:1.3px;margin-right:-1.3px">配置終了角</span><br>[度]</div>
<div class="a" style="left:225px;top:411px;width:33px;height:20px;background:#f0f0f0;border-right:1px solid #202020;border-bottom:1px solid #202020"></div>
<div class="a" style="left:225px;top:411px;width:32px;height:19px;background:#ffff00;border:1px solid #fff;box-shadow:inset 0 0 0 1px #a0a0a0"></div>
<div class="t m" style="left:225px;top:415px;width:33px;text-align:center;font-size:13px">1</div>
<div class="a" style="left:258px;top:411px;width:179px;height:20px;background:#fff;border-right:1px solid #202020;border-bottom:1px solid #202020"></div>
<div class="t m" style="left:261px;top:415px;font-size:13px;letter-spacing:-0.3px">鉄筋(SD295 D32)</div>
<div class="btn" style="left:417px;top:414px;width:16px;height:13px"></div>
<svg class="a" style="left:422px;top:419px" width="5" height="3" viewBox="0 0 5 3" shape-rendering="crispEdges"><rect x="0" y="0" width="5" height="1" fill="#000"/><rect x="1" y="1" width="3" height="1" fill="#000"/><rect x="2" y="2" width="1" height="1" fill="#000"/></svg>
<div class="a" style="left:437px;top:411px;width:57px;height:20px;background:#808080;border-right:1px solid #202020;border-bottom:1px solid #202020;box-shadow:inset -1px -1px 0 #fff"></div>
<div class="a" style="left:494px;top:411px;width:49px;height:20px;background:#fff;border-right:1px solid #202020;border-bottom:1px solid #202020"></div>
<div class="t" style="left:498px;top:413px;font-size:14px;letter-spacing:-0.6px">72</div>
<div class="a" style="left:543px;top:411px;width:73px;height:20px;background:#fff;border-right:1px solid #202020;border-bottom:1px solid #202020"></div>
<div class="t" style="left:547px;top:413px;font-size:14px;letter-spacing:-0.6px">130</div>
<div class="a" style="left:616px;top:411px;width:73px;height:20px;background:#fff;border-right:1px solid #202020;border-bottom:1px solid #202020"></div>
<div class="t" style="left:620px;top:413px;font-size:14px;letter-spacing:-0.6px">0</div>
<div class="a" style="left:689px;top:411px;width:73px;height:20px;background:#fff;border-right:1px solid #202020;border-bottom:1px solid #202020"></div>
<div class="t" style="left:693px;top:413px;font-size:14px;letter-spacing:-0.6px">360</div>
<div class="a" style="left:225px;top:431px;width:33px;height:20px;background:#f0f0f0;border-right:1px solid #202020;border-bottom:1px solid #202020"></div>
<div class="a" style="left:225px;top:431px;width:32px;height:19px;background:#f0f0f0;border:1px solid #fff;box-shadow:inset 0 0 0 1px #a0a0a0,inset 0 0 0 2px #fff"></div>
<div class="t m" style="left:225px;top:435px;width:33px;text-align:center;font-size:13px">2</div>
<div class="a" style="left:258px;top:431px;width:179px;height:20px;background:#fff;border-right:1px solid #202020;border-bottom:1px solid #202020"></div>
<div class="t m" style="left:261px;top:435px;font-size:13px;letter-spacing:-0.3px">鉄筋(SD295 D32)</div>
<div class="btn" style="left:417px;top:434px;width:16px;height:13px"></div>
<svg class="a" style="left:422px;top:439px" width="5" height="3" viewBox="0 0 5 3" shape-rendering="crispEdges"><rect x="0" y="0" width="5" height="1" fill="#000"/><rect x="1" y="1" width="3" height="1" fill="#000"/><rect x="2" y="2" width="1" height="1" fill="#000"/></svg>
<div class="a" style="left:437px;top:431px;width:57px;height:20px;background:#808080;border-right:1px solid #202020;border-bottom:1px solid #202020;box-shadow:inset -1px -1px 0 #fff"></div>
<div class="a" style="left:494px;top:431px;width:49px;height:20px;background:#fff;border-right:1px solid #202020;border-bottom:1px solid #202020"></div>
<div class="t" style="left:498px;top:433px;font-size:14px;letter-spacing:-0.6px">72</div>
<div class="a" style="left:543px;top:431px;width:73px;height:20px;background:#fff;border-right:1px solid #202020;border-bottom:1px solid #202020"></div>
<div class="t" style="left:547px;top:433px;font-size:14px;letter-spacing:-0.6px">230</div>
<div class="a" style="left:616px;top:431px;width:73px;height:20px;background:#fff;border-right:1px solid #202020;border-bottom:1px solid #202020"></div>
<div class="t" style="left:620px;top:433px;font-size:14px;letter-spacing:-0.6px">0</div>
<div class="a" style="left:689px;top:431px;width:73px;height:20px;background:#fff;border-right:1px solid #202020;border-bottom:1px solid #202020"></div>
<div class="t" style="left:693px;top:433px;font-size:14px;letter-spacing:-0.6px">360</div>
<div class="a" style="left:225px;top:451px;width:33px;height:20px;background:#f0f0f0;border-right:1px solid #202020;border-bottom:1px solid #202020"></div>
<div class="a" style="left:225px;top:451px;width:32px;height:19px;background:#f0f0f0;border:1px solid #fff;box-shadow:inset 0 0 0 1px #a0a0a0,inset 0 0 0 2px #fff"></div>
<div class="t m" style="left:225px;top:455px;width:33px;text-align:center;font-size:13px">3</div>
<div class="a" style="left:258px;top:451px;width:179px;height:20px;background:#fff;border-right:1px solid #202020;border-bottom:1px solid #202020"></div>
<div class="t m" style="left:261px;top:455px;font-size:13px;letter-spacing:-0.3px">鉄筋(SD295 D32)</div>
<div class="btn" style="left:417px;top:454px;width:16px;height:13px"></div>
<svg class="a" style="left:422px;top:459px" width="5" height="3" viewBox="0 0 5 3" shape-rendering="crispEdges"><rect x="0" y="0" width="5" height="1" fill="#000"/><rect x="1" y="1" width="3" height="1" fill="#000"/><rect x="2" y="2" width="1" height="1" fill="#000"/></svg>
<div class="a" style="left:437px;top:451px;width:57px;height:20px;background:#808080;border-right:1px solid #202020;border-bottom:1px solid #202020;box-shadow:inset -1px -1px 0 #fff"></div>
<div class="a" style="left:494px;top:451px;width:49px;height:20px;background:#fff;border-right:1px solid #202020;border-bottom:1px solid #202020"></div>
<div class="t" style="left:498px;top:453px;font-size:14px;letter-spacing:-0.6px">36</div>
<div class="a" style="left:543px;top:451px;width:73px;height:20px;background:#fff;border-right:1px solid #202020;border-bottom:1px solid #202020"></div>
<div class="t" style="left:547px;top:453px;font-size:14px;letter-spacing:-0.6px">670</div>
<div class="a" style="left:616px;top:451px;width:73px;height:20px;background:#fff;border-right:1px solid #202020;border-bottom:1px solid #202020"></div>
<div class="t" style="left:620px;top:453px;font-size:14px;letter-spacing:-0.6px">0</div>
<div class="a" style="left:689px;top:451px;width:73px;height:20px;background:#fff;border-right:1px solid #202020;border-bottom:1px solid #202020"></div>
<div class="t" style="left:693px;top:453px;font-size:14px;letter-spacing:-0.6px">360</div>
<svg class="a" style="left:607px;top:546px" width="13" height="20" viewBox="0 0 13 20"><path d="M0.5,0.5 L0.5,15.5 L4.5,11.5 L7.5,18.5 L9.5,17.5 L6.5,10.5 L11.5,10.5 Z" fill="#fff" stroke="#000" stroke-width="1"/></svg>
<div class="t" style="left:2px;top:698px;font-size:11px;letter-spacing:-0.82px">ﾍﾙﾌﾟを表示するには [F1] を押してください。</div>
<div class="a" style="left:818px;top:695px;width:18px;height:17px;border-top:1px solid #a0a0a0;border-left:1px solid #a0a0a0"></div>
<div class="a" style="left:838px;top:695px;width:28px;height:17px;border-top:1px solid #a0a0a0;border-left:1px solid #a0a0a0"></div>
<div class="a" style="left:868px;top:695px;width:34px;height:17px;border-top:1px solid #a0a0a0;border-left:1px solid #a0a0a0"></div>
<div class="a" style="left:904px;top:695px;width:32px;height:17px;border-top:1px solid #a0a0a0;border-left:1px solid #a0a0a0"></div>
<svg class="a" style="left:942px;top:700px" width="12" height="12" viewBox="0 0 12 12"><path d="M11,1 L1,11 M11,5 L5,11 M11,9 L9,11" stroke="#a0a0a0" stroke-width="1.2"/></svg>
</body></html>
